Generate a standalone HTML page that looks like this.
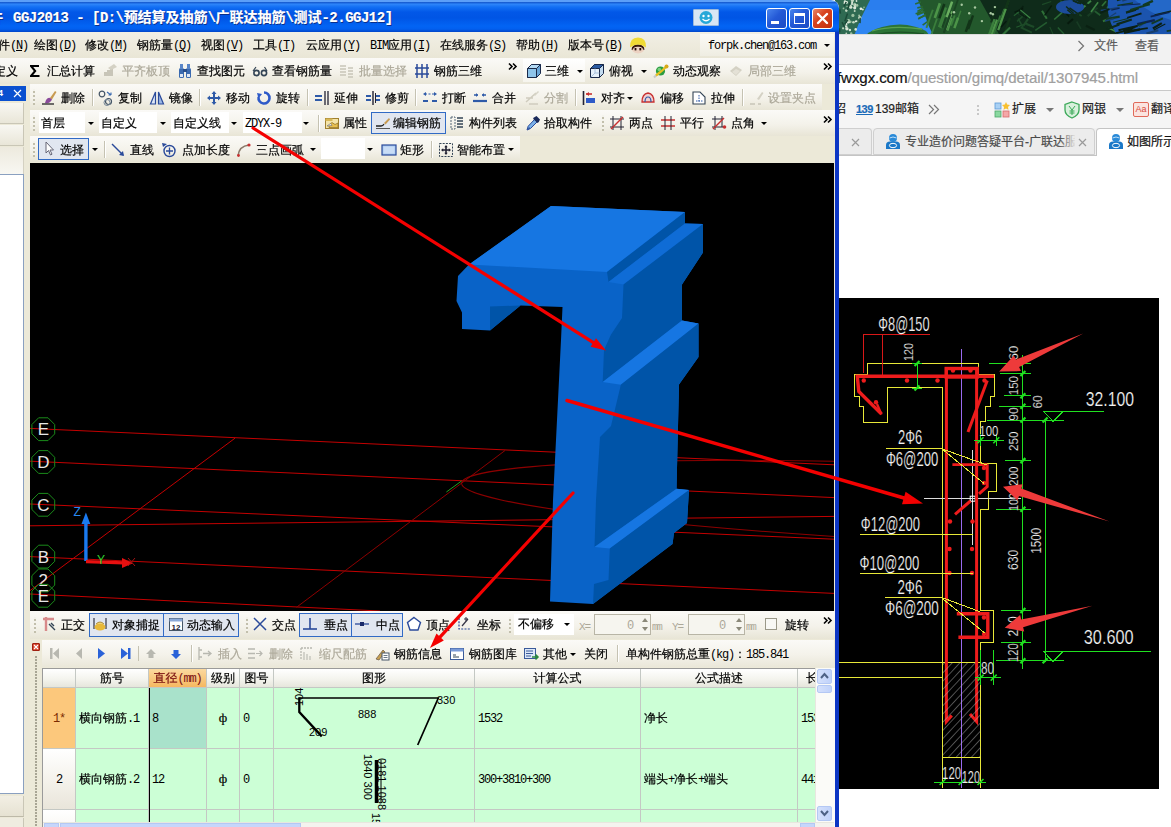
<!DOCTYPE html>
<html lang="zh"><head><meta charset="utf-8"><title>GGJ2013</title>
<style>
*{box-sizing:border-box;margin:0;padding:0}
html,body{width:1171px;height:827px;overflow:hidden;background:#fff}
body{position:relative;font-family:"Liberation Sans","WenQuanYi Zen Hei","Noto Sans CJK SC",sans-serif;font-size:12px;color:#000;line-height:14px}
i{font-style:normal;font-family:"Liberation Mono","WenQuanYi Zen Hei",monospace;letter-spacing:-1.2px;-webkit-text-stroke:0}
.ns{font-family:"Liberation Sans","Noto Sans CJK SC",sans-serif;-webkit-text-stroke:0}
.a{position:absolute}
.t{position:absolute;white-space:nowrap;height:14px;line-height:14px;font-size:12px;-webkit-text-stroke:.2px}
.g{color:#aca899}
.tb{position:absolute;left:0;width:835px;height:26px;background:linear-gradient(#fbfaf7,#f4f2ea 55%,#e8e5d6)}
.sep{position:absolute;width:1px;height:17px;background:#c5c2b2;border-right:1px solid #fff;width:2px}
.grip{position:absolute;width:2px;height:16px;background:repeating-linear-gradient(#f4f3ec 0,#f4f3ec 2px,#c2bfac 2px,#c2bfac 4px)}
.dd{position:absolute;width:0;height:0;border-left:3px solid transparent;border-right:3px solid transparent;border-top:3px solid #000}
.btn{position:absolute;border:1px solid #316ac5;background:#e1e6f0}
.chev{position:absolute;font-size:11px;font-weight:bold;line-height:10px;letter-spacing:-2px}
svg{position:absolute;overflow:visible}
</style></head>
<body>
<div class="a" style="left:835px;top:0;width:336px;height:35px;background:#1f62c8;overflow:hidden">
<svg style="left:0;top:0;filter:blur(.7px)" width="336" height="36" viewBox="835 0 336 36"><rect x="835" y="0" width="336" height="36" fill="#0d2617"/><path d="M850 0 H925 L936 36 H846Z" fill="#2f86f2"/><path d="M850 0 H925 L928 10 H850Z" fill="#2a7eee"/><path d="M835 0 H870 L866 8 L861 18 L857 28 L854 36 H835Z" fill="#2f6a52"/><circle cx="852.9" cy="15.4" r="1.6" fill="#9cc0a0"/><circle cx="859.1" cy="15.4" r="1.0" fill="#9cc0a0"/><circle cx="855.7" cy="21.4" r="0.9" fill="#eef4e8"/><circle cx="854.9" cy="4.8" r="1.6" fill="#dbe8d8"/><circle cx="848.6" cy="20.2" r="1.2" fill="#c2d8c0"/><circle cx="856.5" cy="21.2" r="0.9" fill="#dbe8d8"/><circle cx="847.1" cy="6.5" r="0.8" fill="#9cc0a0"/><circle cx="854.7" cy="11.1" r="1.0" fill="#c2d8c0"/><circle cx="850.2" cy="21.8" r="1.4" fill="#9cc0a0"/><circle cx="848.4" cy="22.3" r="1.3" fill="#dbe8d8"/><circle cx="846.5" cy="24.1" r="1.0" fill="#eef4e8"/><circle cx="856.5" cy="1.0" r="0.9" fill="#dbe8d8"/><circle cx="846.9" cy="28.8" r="1.7" fill="#dbe8d8"/><circle cx="864.0" cy="7.3" r="0.8" fill="#9cc0a0"/><circle cx="846.3" cy="33.3" r="0.9" fill="#c2d8c0"/><circle cx="845.4" cy="26.5" r="0.9" fill="#eef4e8"/><circle cx="852.4" cy="0.5" r="1.6" fill="#c2d8c0"/><circle cx="843.5" cy="8.4" r="0.9" fill="#9cc0a0"/><circle cx="855.2" cy="6.0" r="1.2" fill="#c2d8c0"/><circle cx="851.2" cy="33.5" r="1.2" fill="#9cc0a0"/><circle cx="852.0" cy="4.0" r="1.0" fill="#eef4e8"/><circle cx="855.7" cy="29.4" r="1.3" fill="#dbe8d8"/><circle cx="850.8" cy="7.2" r="1.6" fill="#dbe8d8"/><circle cx="845.0" cy="1.4" r="1.2" fill="#dbe8d8"/><circle cx="846.4" cy="26.3" r="1.1" fill="#dbe8d8"/><circle cx="846.6" cy="2.5" r="1.4" fill="#dbe8d8"/><circle cx="848.1" cy="20.4" r="1.2" fill="#9cc0a0"/><circle cx="843.1" cy="28.3" r="1.1" fill="#c2d8c0"/><circle cx="846.3" cy="10.6" r="1.3" fill="#c2d8c0"/><circle cx="857.1" cy="5.4" r="1.3" fill="#9cc0a0"/><circle cx="849.9" cy="30.0" r="1.2" fill="#dbe8d8"/><circle cx="854.5" cy="3.7" r="1.0" fill="#9cc0a0"/><circle cx="860.9" cy="8.7" r="1.3" fill="#eef4e8"/><circle cx="859.8" cy="17.7" r="1.7" fill="#c2d8c0"/><circle cx="854.7" cy="7.8" r="1.6" fill="#dbe8d8"/><circle cx="862.8" cy="9.5" r="1.0" fill="#dbe8d8"/><circle cx="852.1" cy="2.4" r="1.0" fill="#dbe8d8"/><circle cx="850.4" cy="6.0" r="1.3" fill="#c2d8c0"/><circle cx="844.7" cy="3.1" r="1.2" fill="#eef4e8"/><circle cx="853.5" cy="22.3" r="1.3" fill="#c2d8c0"/><path d="M860.2 17.7 l-0.2 5.4" stroke="#1c4a38" stroke-width="1.5"/><path d="M839.8 9.4 l0.6 4.3" stroke="#1c4a38" stroke-width="1.5"/><path d="M846.2 2.0 l-2.2 4.3" stroke="#1c4a38" stroke-width="1.5"/><path d="M847.5 13.6 l-2.7 7.7" stroke="#1c4a38" stroke-width="1.5"/><path d="M842.0 22.1 l2.8 5.4" stroke="#1c4a38" stroke-width="1.5"/><path d="M849.9 2.5 l-2.5 7.4" stroke="#1c4a38" stroke-width="1.5"/><path d="M839.7 28.3 l-0.0 4.1" stroke="#1c4a38" stroke-width="1.5"/><path d="M847.7 19.9 l-2.9 4.3" stroke="#1c4a38" stroke-width="1.5"/><path d="M868 33 Q880 25 900 24.5 Q915 25 926 31 L930 36 H866Z" fill="#2c7436"/><path d="M872 31 Q892 25 922 29" stroke="#58a050" stroke-width="1.3" fill="none"/><path d="M874 35 Q896 30 924 34" stroke="#1c5226" stroke-width="1.3" fill="none"/><path d="M918 0 H1012 L1020 36 H934 Q928 26 926 18 Q921 8 918 0Z" fill="#23582c"/><path d="M980 0 H1171 V36 H1000Z" fill="#0f2b1a"/><path d="M920.8 2.0 l-5.6 2.0" stroke="#2a6a34" stroke-width="1.6"/><path d="M923.6 9.2 l-6.7 4.7" stroke="#2a6a34" stroke-width="1.6"/><path d="M925.9 15.3 l-7.3 2.9" stroke="#2a6a34" stroke-width="1.6"/><path d="M924.6 11.9 l-7.6 3.1" stroke="#2a6a34" stroke-width="1.6"/><path d="M922.7 6.8 l-5.4 1.1" stroke="#2a6a34" stroke-width="1.6"/><path d="M928.2 21.1 l-5.6 4.1" stroke="#2a6a34" stroke-width="1.6"/><path d="M925.6 14.5 l-7.4 4.6" stroke="#2a6a34" stroke-width="1.6"/><path d="M923.1 8.1 l-5.7 3.4" stroke="#2a6a34" stroke-width="1.6"/><path d="M924.4 11.4 l-8.8 2.4" stroke="#2a6a34" stroke-width="1.6"/><path d="M1004.4 9.0 l-4.5 12.9" stroke="#2f6e34" stroke-width="2.1"/><path d="M945.9 7.5 l-6.9 19.7" stroke="#3a7e3c" stroke-width="2.4"/><path d="M960.8 10.8 l-4.8 13.8" stroke="#3a7e3c" stroke-width="1.4"/><path d="M958.1 17.7 l-3.7 10.5" stroke="#4c9448" stroke-width="2.5"/><path d="M952.1 1.7 l-5.4 15.4" stroke="#6aae60" stroke-width="2.5"/><path d="M996.5 6.4 l-5.7 16.2" stroke="#123418" stroke-width="1.6"/><path d="M997.1 19.6 l-5.4 15.4" stroke="#4c9448" stroke-width="2.4"/><path d="M952.2 11.4 l-6.3 18.1" stroke="#6aae60" stroke-width="2.0"/><path d="M954.7 15.4 l-3.6 10.2" stroke="#3a7e3c" stroke-width="1.8"/><path d="M945.2 14.9 l-4.6 13.2" stroke="#3a7e3c" stroke-width="2.3"/><path d="M1008.7 0.5 l-4.0 11.3" stroke="#1a4422" stroke-width="2.1"/><path d="M994.6 19.1 l-6.4 18.2" stroke="#3a7e3c" stroke-width="2.4"/><path d="M950.5 13.7 l-6.7 19.1" stroke="#1a4422" stroke-width="2.2"/><path d="M944.3 4.0 l-5.0 14.1" stroke="#123418" stroke-width="2.5"/><path d="M970.0 19.9 l-4.2 11.9" stroke="#123418" stroke-width="2.5"/><path d="M937.0 18.5 l-6.5 18.7" stroke="#3a7e3c" stroke-width="1.8"/><path d="M945.8 17.5 l-3.5 10.1" stroke="#1a4422" stroke-width="2.0"/><path d="M1000.3 15.5 l-7.5 21.3" stroke="#2f6e34" stroke-width="1.7"/><path d="M1008.6 0.2 l-7.1 20.4" stroke="#123418" stroke-width="2.5"/><path d="M939.9 3.3 l-5.1 14.7" stroke="#4c9448" stroke-width="2.6"/><path d="M973.0 15.4 l-4.8 13.8" stroke="#123418" stroke-width="2.4"/><path d="M957.9 -0.2 l-5.4 15.3" stroke="#1a4422" stroke-width="1.8"/><path d="M952.0 18.2 l-4.4 12.6" stroke="#4c9448" stroke-width="1.8"/><path d="M932.8 9.7 l-6.4 18.2" stroke="#3a7e3c" stroke-width="1.9"/><path d="M1010.0 17.8 l-5.7 16.2" stroke="#123418" stroke-width="2.2"/><path d="M1005.7 8.8 l-7.5 21.4" stroke="#4c9448" stroke-width="2.3"/><circle cx="969.2" cy="13.2" r="1.2" fill="#a8c8a0"/><circle cx="990.7" cy="13.2" r="1.2" fill="#a8c8a0"/><circle cx="954.0" cy="12.3" r="1.2" fill="#a8c8a0"/><circle cx="994.9" cy="7.1" r="1.2" fill="#a8c8a0"/><circle cx="981.9" cy="21.1" r="1.2" fill="#a8c8a0"/><circle cx="992.9" cy="14.2" r="1.2" fill="#a8c8a0"/><circle cx="961.7" cy="4.8" r="1.2" fill="#a8c8a0"/><circle cx="975.0" cy="7.5" r="1.2" fill="#a8c8a0"/><path d="M1062.2 12.3 l-8.0 7.2" stroke="#2f7038" stroke-width="1.6"/><path d="M1010.1 27.5 l-7.9 7.8" stroke="#2f7038" stroke-width="2.1"/><path d="M1057.8 27.6 l6.2 6.3" stroke="#245c30" stroke-width="1.4"/><path d="M1108.6 28.1 l8.2 3.8" stroke="#3c8444" stroke-width="1.7"/><path d="M1111.4 3.9 l-4.3 4.1" stroke="#2f7038" stroke-width="1.8"/><path d="M1042.0 10.7 l4.8 8.1" stroke="#2f7038" stroke-width="2.0"/><path d="M1076.7 21.5 l4.2 7.4" stroke="#183c24" stroke-width="1.6"/><path d="M1023.4 6.1 l-8.2 9.0" stroke="#0a2012" stroke-width="1.7"/><path d="M1020.7 27.4 l11.2 5.2" stroke="#1d4a28" stroke-width="2.1"/><path d="M1027.4 23.3 l-11.1 3.9" stroke="#245c30" stroke-width="1.2"/><path d="M1015.1 11.6 l10.7 6.0" stroke="#183c24" stroke-width="1.8"/><path d="M1028.1 18.8 l-4.8 7.0" stroke="#1d4a28" stroke-width="2.1"/><path d="M1116.4 3.5 l8.0 7.8" stroke="#245c30" stroke-width="2.0"/><path d="M1060.4 0.7 l5.2 4.3" stroke="#245c30" stroke-width="1.2"/><path d="M1023.2 8.5 l-8.6 3.9" stroke="#071a0e" stroke-width="1.6"/><path d="M1092.9 9.8 l7.4 5.5" stroke="#245c30" stroke-width="1.7"/><path d="M1006.5 21.0 l-5.5 6.2" stroke="#071a0e" stroke-width="1.4"/><path d="M1111.0 18.1 l-8.1 3.1" stroke="#2f7038" stroke-width="2.0"/><path d="M1086.0 25.8 l8.6 4.3" stroke="#0a2012" stroke-width="2.2"/><path d="M1097.6 7.7 l-10.0 8.4" stroke="#183c24" stroke-width="2.1"/><path d="M1020.3 9.9 l10.1 8.4" stroke="#3c8444" stroke-width="1.2"/><path d="M1026.3 23.9 l7.8 3.1" stroke="#1d4a28" stroke-width="2.2"/><path d="M1108.8 1.5 l11.6 7.7" stroke="#1d4a28" stroke-width="1.3"/><path d="M1051.7 5.5 l-7.1 10.0" stroke="#071a0e" stroke-width="1.3"/><path d="M1018.8 11.9 l-4.9 3.8" stroke="#245c30" stroke-width="1.3"/><path d="M1051.2 1.5 l-9.2 3.1" stroke="#1d4a28" stroke-width="1.3"/><path d="M1109.1 16.5 l11.7 7.0" stroke="#2f7038" stroke-width="1.8"/><path d="M1098.1 2.3 l-7.1 9.6" stroke="#3c8444" stroke-width="1.6"/><path d="M1024.4 14.9 l-7.4 6.5" stroke="#1d4a28" stroke-width="1.6"/><path d="M1073.8 11.0 l7.9 4.9" stroke="#1d4a28" stroke-width="1.8"/><path d="M1091.0 0.8 l-8.7 7.4" stroke="#3c8444" stroke-width="1.9"/><path d="M1049.8 26.9 l4.4 9.9" stroke="#1d4a28" stroke-width="1.1"/><path d="M1109.1 12.9 l6.0 8.3" stroke="#2f7038" stroke-width="1.6"/><path d="M1112.8 21.7 l5.2 9.7" stroke="#245c30" stroke-width="1.7"/><path d="M1018.2 18.7 l4.9 9.0" stroke="#1d4a28" stroke-width="1.6"/><path d="M1019.3 13.3 l7.6 4.8" stroke="#0a2012" stroke-width="1.8"/><path d="M1046.9 22.3 l-11.6 8.1" stroke="#245c30" stroke-width="1.6"/><path d="M1062.8 9.3 l6.2 7.3" stroke="#071a0e" stroke-width="1.7"/><path d="M1073.0 19.0 l-5.5 4.7" stroke="#071a0e" stroke-width="2.1"/><path d="M1106.1 1.2 l-4.1 4.8" stroke="#2f7038" stroke-width="1.7"/><ellipse cx="1070" cy="7" rx="14" ry="7" fill="#1c4c9c"/><path d="M1108 0 H1171 V36 H1118 Q1106 20 1108 0Z" fill="#1b54ae"/><path d="M1135 0 H1171 V20 Q1150 14 1135 0Z" fill="#2468c8"/><path d="M1107.3 18.4 l8.9 -5.6" stroke="#173f6e" stroke-width="1.2"/><path d="M1116.7 33.4 l13.8 -4.2" stroke="#123a22" stroke-width="1.5"/><path d="M1152.9 28.5 l8.9 -5.4" stroke="#0a1f14" stroke-width="2.2"/><path d="M1154.6 15.1 l17.0 -4.0" stroke="#0e2a1a" stroke-width="1.5"/><path d="M1146.4 33.6 l11.9 -3.3" stroke="#173f6e" stroke-width="2.2"/><path d="M1113.1 22.2 l15.0 -3.7" stroke="#123a22" stroke-width="1.1"/><path d="M1105.9 19.2 l13.8 -2.6" stroke="#123a22" stroke-width="2.2"/><path d="M1100.7 10.5 l18.9 -3.0" stroke="#173f6e" stroke-width="1.4"/><path d="M1151.5 23.6 l11.4 -5.3" stroke="#123a22" stroke-width="1.9"/><path d="M1123.2 30.8 l11.9 -3.8" stroke="#0a1f14" stroke-width="2.3"/><path d="M1166.7 31.1 l13.3 -2.0" stroke="#123a22" stroke-width="1.6"/><path d="M1115.7 32.9 l16.8 -3.4" stroke="#0a1f14" stroke-width="1.5"/><path d="M1126.0 12.4 l12.7 -4.1" stroke="#0e2a1a" stroke-width="2.0"/><path d="M1126.1 13.3 l9.9 -3.0" stroke="#0e2a1a" stroke-width="1.2"/><path d="M1153.9 30.0 l11.4 -5.9" stroke="#0a1f14" stroke-width="1.1"/><path d="M1111.3 10.1 l8.3 -1.8" stroke="#0c2450" stroke-width="1.1"/><path d="M1138.8 26.8 l9.0 -5.6" stroke="#173f6e" stroke-width="1.1"/><path d="M1122.3 0.9 l15.8 -5.5" stroke="#173f6e" stroke-width="1.6"/><path d="M1150.6 16.6 l18.9 -4.3" stroke="#0c2450" stroke-width="1.6"/><path d="M1124.0 32.9 l16.1 -3.5" stroke="#0a1f14" stroke-width="2.1"/><path d="M1105.1 21.0 l8.6 -2.2" stroke="#173f6e" stroke-width="1.5"/><path d="M1100.3 12.9 l9.1 -3.7" stroke="#0a1f14" stroke-width="1.9"/><path d="M1137.2 24.1 l17.6 -3.9" stroke="#0c2450" stroke-width="2.3"/><path d="M1117.4 5.5 l15.6 -2.6" stroke="#123a22" stroke-width="1.3"/><path d="M1130.2 9.9 l19.6 -5.7" stroke="#123a22" stroke-width="2.0"/><path d="M1121.5 5.3 l19.0 -1.4" stroke="#0c2450" stroke-width="1.0"/><path d="M1134.2 27.2 l11.8 -5.0" stroke="#123a22" stroke-width="1.3"/><path d="M1116.7 24.4 l15.1 -4.9" stroke="#0e2a1a" stroke-width="2.3"/><path d="M1128.6 31.0 l19.2 -2.9" stroke="#0a1f14" stroke-width="1.7"/><path d="M1118.5 30.2 l19.0 -4.3" stroke="#0a1f14" stroke-width="2.1"/><path d="M1106.6 29.3 l12.8 -4.9" stroke="#0e2a1a" stroke-width="2.1"/><path d="M1127.3 17.9 l14.2 -4.6" stroke="#0a1f14" stroke-width="1.9"/><path d="M1116.9 0.4 l13.7 -4.1" stroke="#0e2a1a" stroke-width="2.0"/><path d="M1143.0 5.3 l9.9 -4.4" stroke="#123a22" stroke-width="2.3"/><path d="M1083.4 2.1 l8.7 5.1" stroke="#0e2a1a" stroke-width="1.5"/><path d="M1073.1 0.8 l7.9 2.9" stroke="#0e2a1a" stroke-width="1.5"/><path d="M1062.2 14.7 l5.7 2.6" stroke="#0e2a1a" stroke-width="1.5"/><path d="M1067.3 9.8 l7.6 6.4" stroke="#0e2a1a" stroke-width="1.5"/><path d="M1079.3 1.3 l8.7 4.7" stroke="#0e2a1a" stroke-width="1.5"/><path d="M1072.7 0.3 l5.9 3.0" stroke="#0e2a1a" stroke-width="1.5"/><path d="M1078.9 12.5 l7.2 2.2" stroke="#0e2a1a" stroke-width="1.5"/><path d="M1069.5 7.9 l9.7 6.8" stroke="#0e2a1a" stroke-width="1.5"/><path d="M1066.1 6.5 l7.8 7.0" stroke="#0e2a1a" stroke-width="1.5"/><path d="M1078.4 1.1 l5.4 2.7" stroke="#0e2a1a" stroke-width="1.5"/></svg></div>
<div class="a" style="left:839px;top:34px;width:332px;height:30px;background:#f2f2f2;border-top:1px solid #dcdcdc"></div>
<svg style="left:1077px;top:40px" width="8" height="12"><path d="M1.5 1 L6.5 6 L1.5 11" stroke="#777" stroke-width="1.3" fill="none"/></svg>
<div class="t ns" style="left:1094px;top:38px;color:#5c5c5c;height:16px;line-height:16px">文件</div>
<div class="t ns" style="left:1135px;top:38px;color:#5c5c5c;height:16px;line-height:16px">查看</div>
<div class="a" style="left:839px;top:64px;width:332px;height:27px;background:#fff;border-top:1px solid #c4c4c4;border-bottom:1px solid #c9c9c9"></div>
<div class="t ns" style="left:837px;top:68px;height:20px;line-height:20px;font-size:15.1px;color:#a0a0a0;letter-spacing:-0.1px"><span style="color:#111">fwxgx.com</span>/question/gimq/detail/1307945.html</div>
<div class="a" style="left:839px;top:91px;width:332px;height:37px;background:#f5f5f5"></div>
<div class="t ns" style="left:834px;top:102px;color:#222">招</div>
<div class="t ns" style="left:856px;top:102px;font-weight:bold;color:#1a6ab8;font-size:11px;letter-spacing:-0.5px;text-decoration:underline">139</div>
<div class="t ns" style="left:875px;top:102px;color:#222">139邮箱</div>
<svg style="left:928px;top:104px" width="12" height="11"><path d="M1 1 L5.5 5.5 L1 10 M6 1 L10.5 5.5 L6 10" stroke="#777" stroke-width="1.2" fill="none"/></svg>
<div class="a" style="left:977px;top:103px;width:2px;height:14px;background:repeating-linear-gradient(#f5f5f5 0,#f5f5f5 2px,#c8c8c8 2px,#c8c8c8 4px)"></div>
<svg style="left:994px;top:102px" width="16" height="16"><rect x="1" y="1" width="6" height="6" fill="#a8d0f4" stroke="#5a9ad8" stroke-width=".8"/><rect x="1" y="9" width="6" height="6" fill="#8ad8a0" stroke="#4aa868" stroke-width=".8"/><rect x="9" y="9" width="6" height="6" fill="#f4a8a8" stroke="#d86a6a" stroke-width=".8"/><path d="M12 0 L13.2 2.6 L16 3 L14 5 L14.5 7.8 L12 6.4 L9.5 7.8 L10 5 L8 3 L10.8 2.6Z" fill="#f8c030"/></svg>
<div class="t ns" style="left:1012px;top:102px;color:#222">扩展</div>
<div class="dd" style="left:1046px;top:108px;border-top-color:#777;border-width:4px 4px 0 4px;border-top-width:4px"></div>
<svg style="left:1064px;top:101px" width="16" height="18"><path d="M8 1 L15 3.5 V9 Q15 14 8 17 Q1 14 1 9 V3.5Z" fill="#d8f0dc" stroke="#3aa858" stroke-width="1.3"/><path d="M5 5 L8 9 L11 5 M8 9 V14 M5.5 10 H10.5 M5.5 12 H10.5" stroke="#3aa858" stroke-width="1" fill="none"/></svg>
<div class="t ns" style="left:1082px;top:102px;color:#222">网银</div>
<div class="dd" style="left:1116px;top:108px;border-top-color:#777;border-width:4px 4px 0 4px"></div>
<div class="a" style="left:1133px;top:102px;width:16px;height:15px;border:1px solid #e06a5a;background:#fbe4e0;border-radius:2px;color:#d84a3a;font-size:9px;line-height:13px;text-align:center;font-family:'Liberation Sans',sans-serif">Aa</div>
<div class="t ns" style="left:1151px;top:102px;color:#222">翻译</div>
<div class="a" style="left:839px;top:128px;width:332px;height:28px;background:#f1f1f1"></div>
<div class="a" style="left:839px;top:128px;width:33px;height:27px;background:#ececec;border:1px solid #cfcfcf;border-left:0;border-radius:0 4px 0 0"></div>
<svg style="left:851px;top:138px" width="9" height="9"><path d="M1 1 L8 8 M8 1 L1 8" stroke="#9a9a9a" stroke-width="1.2"/></svg>
<div class="a" style="left:873px;top:128px;width:222px;height:27px;background:#ececec;border:1px solid #cfcfcf;border-radius:4px 4px 0 0"></div>
<div class="a" style="left:1096px;top:128px;width:90px;height:28px;background:#fff;border:1px solid #c4c4c4;border-bottom:0;border-radius:4px 4px 0 0"></div>
<div class="a" style="left:839px;top:155px;width:257px;height:1px;background:#c4c4c4"></div>
<svg style="left:885px;top:133px" width="16" height="17" viewBox="0 0 16 17"><circle cx="8" cy="5" r="4" fill="#2a8ad8"/><path d="M4.5 5 Q8 3 11.5 5" stroke="#bfe0f8" stroke-width="1" fill="none"/><path d="M1 16 V12 Q1 8.5 5 8.5 H11 Q15 8.5 15 12 V16Z" fill="#1a78c8"/><ellipse cx="8" cy="12.5" rx="3.6" ry="2.2" fill="none" stroke="#fff" stroke-width="1"/></svg>
<div class="t ns" style="left:905px;top:135px;color:#4a4a4a;width:170px;overflow:hidden">专业造价问题答疑平台-广联达服务</div>
<div class="a" style="left:1060px;top:132px;width:16px;height:20px;background:linear-gradient(90deg,rgba(236,236,236,0),#ececec)"></div>
<svg style="left:1078px;top:138px" width="9" height="9"><path d="M1 1 L8 8 M8 1 L1 8" stroke="#9a9a9a" stroke-width="1.2"/></svg>
<svg style="left:1108px;top:133px" width="16" height="17" viewBox="0 0 16 17"><circle cx="8" cy="5" r="4" fill="#2a8ad8"/><path d="M4.5 5 Q8 3 11.5 5" stroke="#bfe0f8" stroke-width="1" fill="none"/><path d="M1 16 V12 Q1 8.5 5 8.5 H11 Q15 8.5 15 12 V16Z" fill="#1a78c8"/><ellipse cx="8" cy="12.5" rx="3.6" ry="2.2" fill="none" stroke="#fff" stroke-width="1"/></svg>
<div class="t ns" style="left:1127px;top:135px;color:#111">如图所示</div>
<div class="a" style="left:839px;top:298px;width:320px;height:491px;background:#000;overflow:hidden">
<svg style="left:0;top:0" width="320" height="491" viewBox="839 298 320 491">
<defs><pattern id="h" width="6" height="5.6" patternUnits="userSpaceOnUse" patternTransform="rotate(-47)"><line x1="0" y1="0" x2="6" y2="0" stroke="#b4b4b4" stroke-width=".9"/></pattern></defs>
<polyline points="961.6,349.0 961.6,788.0" fill="none" stroke="#9a6af0" stroke-width="1"  shape-rendering="crispEdges"/>
<polyline points="942.6,757.0 942.6,387.4 887.4,387.4 887.4,422.0 863.8,422.0 863.8,406.4 859.6,406.4 859.6,396.4 854.7,396.4 854.7,374.7 867.8,374.7 867.8,363.5 978.1,363.5 978.1,374.7 994.8,374.7 994.8,396.4 990.2,396.4 990.2,406.4 985.7,406.4 985.7,421.5 980.5,421.5 980.5,463.0 996.3,463.0 996.3,491.0 988.1,491.0 988.1,509.2 980.5,509.2 980.5,610.6 993.7,610.6 993.7,642.6 980.5,642.6 980.5,757.0 942.6,757.0" fill="none" stroke="#e8e838" stroke-width="1"  shape-rendering="crispEdges"/>
<polyline points="839.0,662.9 980.5,662.9" fill="none" stroke="#e8e838" stroke-width="1"  shape-rendering="crispEdges"/>
<polyline points="839.0,677.6 942.6,677.6" fill="none" stroke="#e8e838" stroke-width="1"  shape-rendering="crispEdges"/>
<polyline points="942.6,757.0 942.6,788.0" fill="none" stroke="#e8e838" stroke-width="1"  shape-rendering="crispEdges"/>
<polyline points="980.5,757.0 980.5,788.0" fill="none" stroke="#e8e838" stroke-width="1"  shape-rendering="crispEdges"/>
<polyline points="923.7,498.7 1020.5,498.7" fill="none" stroke="#ddd" stroke-width="1"  shape-rendering="crispEdges"/>
<polyline points="972.7,450.0 972.7,545.0" fill="none" stroke="#ddd" stroke-width="1"  shape-rendering="crispEdges"/>
<rect x="970.2" y="496.2" width="5" height="5" fill="none" stroke="#fff" stroke-width="1"/>
<polyline points="863.2,373.0 863.2,334.5 929.7,334.5" fill="none" stroke="#d81818" stroke-width="1"  shape-rendering="crispEdges"/>
<polyline points="882.9,376.0 882.9,334.5" fill="none" stroke="#d81818" stroke-width="1"  shape-rendering="crispEdges"/>
<polyline points="881.5,414.0 858.8,391.5 857.3,376.3 994.0,376.3" fill="none" stroke="#ee1c1c" stroke-width="3.4" />
<polyline points="881.5,414.5 877.0,404.0" fill="none" stroke="#ee1c1c" stroke-width="2.4" />
<rect x="946.2" y="368.5" width="31" height="8.5" fill="none" stroke="#ee1c1c" stroke-width="3.4"/>
<polyline points="946.4,368.0 946.4,721.5 951.8,715.5" fill="none" stroke="#ee1c1c" stroke-width="3" />
<polyline points="976.6,368.0 976.6,721.5 970.0,714.0" fill="none" stroke="#ee1c1c" stroke-width="3" />
<polyline points="987.3,380.5 968.0,432.0" fill="none" stroke="#ee1c1c" stroke-width="3" />
<polyline points="952.4,464.6 987.2,464.6" fill="none" stroke="#ee1c1c" stroke-width="2.6" />
<polyline points="987.2,464.0 987.2,486.5 979.0,493.8" fill="none" stroke="#ee1c1c" stroke-width="3" />
<polyline points="970.5,501.0 955.0,514.3" fill="none" stroke="#ee1c1c" stroke-width="3" />
<polyline points="956.8,613.8 987.8,613.8 987.8,637.2 958.4,637.2" fill="none" stroke="#ee1c1c" stroke-width="3.4" />
<circle cx="863.8" cy="380.5" r="2.2" fill="#ee1c1c"/>
<circle cx="876.0" cy="402.3" r="2.2" fill="#ee1c1c"/>
<circle cx="907.0" cy="380.5" r="2.2" fill="#ee1c1c"/>
<circle cx="937.5" cy="380.5" r="2.2" fill="#ee1c1c"/>
<circle cx="953.0" cy="370.5" r="2.2" fill="#ee1c1c"/>
<circle cx="970.5" cy="370.5" r="2.2" fill="#ee1c1c"/>
<circle cx="984.5" cy="380.5" r="2.2" fill="#ee1c1c"/>
<circle cx="984.0" cy="468.0" r="2.2" fill="#ee1c1c"/>
<circle cx="984.0" cy="483.0" r="2.2" fill="#ee1c1c"/>
<circle cx="950.0" cy="521.5" r="2.2" fill="#ee1c1c"/>
<circle cx="972.5" cy="521.5" r="2.2" fill="#ee1c1c"/>
<circle cx="949.5" cy="549.0" r="2.2" fill="#ee1c1c"/>
<circle cx="972.0" cy="549.0" r="2.2" fill="#ee1c1c"/>
<circle cx="949.5" cy="573.0" r="2.2" fill="#ee1c1c"/>
<circle cx="972.0" cy="573.0" r="2.2" fill="#ee1c1c"/>
<circle cx="984.0" cy="617.5" r="2.2" fill="#ee1c1c"/>
<circle cx="984.0" cy="634.0" r="2.2" fill="#ee1c1c"/>
<rect x="943" y="663" width="37.6" height="94" fill="url(#h)"/>
<polyline points="1022.9,355.0 1022.9,669.0" fill="none" stroke="#20e020" stroke-width="1"  shape-rendering="crispEdges"/>
<polyline points="1045.1,420.0 1045.1,662.0" fill="none" stroke="#20e020" stroke-width="1"  shape-rendering="crispEdges"/>
<polyline points="917.0,361.7 917.0,388.5" fill="none" stroke="#20e020" stroke-width="1"  shape-rendering="crispEdges"/>
<polyline points="988.5,363.1 1031.3,363.1" fill="none" stroke="#20e020" stroke-width="1"  shape-rendering="crispEdges"/>
<polyline points="1020.4,365.6 1025.4,360.6" fill="none" stroke="#20e020" stroke-width="2.2" />
<polyline points="1000.0,373.5 1031.3,373.5" fill="none" stroke="#20e020" stroke-width="1"  shape-rendering="crispEdges"/>
<polyline points="1020.4,376.0 1025.4,371.0" fill="none" stroke="#20e020" stroke-width="2.2" />
<polyline points="1003.5,395.8 1031.3,395.8" fill="none" stroke="#20e020" stroke-width="1"  shape-rendering="crispEdges"/>
<polyline points="1020.4,398.3 1025.4,393.3" fill="none" stroke="#20e020" stroke-width="2.2" />
<polyline points="998.7,406.2 1031.3,406.2" fill="none" stroke="#20e020" stroke-width="1"  shape-rendering="crispEdges"/>
<polyline points="1020.4,408.7 1025.4,403.7" fill="none" stroke="#20e020" stroke-width="2.2" />
<polyline points="986.6,420.0 1064.0,420.0" fill="none" stroke="#20e020" stroke-width="1"  shape-rendering="crispEdges"/>
<polyline points="1020.4,422.5 1025.4,417.5" fill="none" stroke="#20e020" stroke-width="2.2" />
<polyline points="1004.7,460.6 1031.3,460.6" fill="none" stroke="#20e020" stroke-width="1"  shape-rendering="crispEdges"/>
<polyline points="1020.4,463.1 1025.4,458.1" fill="none" stroke="#20e020" stroke-width="2.2" />
<polyline points="995.8,509.2 1031.3,509.2" fill="none" stroke="#20e020" stroke-width="1"  shape-rendering="crispEdges"/>
<polyline points="1020.4,511.7 1025.4,506.7" fill="none" stroke="#20e020" stroke-width="2.2" />
<polyline points="1001.0,610.5 1031.3,610.5" fill="none" stroke="#20e020" stroke-width="1"  shape-rendering="crispEdges"/>
<polyline points="1020.4,613.0 1025.4,608.0" fill="none" stroke="#20e020" stroke-width="2.2" />
<polyline points="1001.0,642.7 1031.3,642.7" fill="none" stroke="#20e020" stroke-width="1"  shape-rendering="crispEdges"/>
<polyline points="1020.4,645.2 1025.4,640.2" fill="none" stroke="#20e020" stroke-width="2.2" />
<polyline points="995.8,660.8 1064.0,660.8" fill="none" stroke="#20e020" stroke-width="1"  shape-rendering="crispEdges"/>
<polyline points="1020.4,663.3 1025.4,658.3" fill="none" stroke="#20e020" stroke-width="2.2" />
<polyline points="1042.6,422.5 1047.6,417.5" fill="none" stroke="#20e020" stroke-width="2.2" />
<polyline points="1042.6,663.3 1047.6,658.3" fill="none" stroke="#20e020" stroke-width="2.2" />
<polyline points="912.0,363.5 922.0,363.5" fill="none" stroke="#20e020" stroke-width="1"  shape-rendering="crispEdges"/>
<polyline points="912.0,388.0 922.0,388.0" fill="none" stroke="#20e020" stroke-width="1"  shape-rendering="crispEdges"/>
<polyline points="914.5,366.0 919.5,361.0" fill="none" stroke="#20e020" stroke-width="2.2" />
<polyline points="914.5,390.5 919.5,385.5" fill="none" stroke="#20e020" stroke-width="2.2" />
<polyline points="1043.4,411.5 1103.9,411.5" fill="none" stroke="#20e020" stroke-width="1"  shape-rendering="crispEdges"/>
<polyline points="1043.4,411.5 1053.1,421.4 1062.8,411.5" fill="none" stroke="#20e020" stroke-width="1"  shape-rendering="crispEdges"/>
<polyline points="1043.4,651.6 1151.0,651.6" fill="none" stroke="#20e020" stroke-width="1"  shape-rendering="crispEdges"/>
<polyline points="1043.4,651.6 1053.1,661.5 1062.8,651.6" fill="none" stroke="#20e020" stroke-width="1"  shape-rendering="crispEdges"/>
<polyline points="973.6,440.3 1003.8,440.3" fill="none" stroke="#20e020" stroke-width="1"  shape-rendering="crispEdges"/>
<polyline points="980.5,434.0 980.5,446.0" fill="none" stroke="#20e020" stroke-width="1"  shape-rendering="crispEdges"/>
<polyline points="996.3,434.0 996.3,446.0" fill="none" stroke="#20e020" stroke-width="1"  shape-rendering="crispEdges"/>
<polyline points="977.5,443.3 983.5,437.3" fill="none" stroke="#20e020" stroke-width="1.6" />
<polyline points="993.3,443.3 999.3,437.3" fill="none" stroke="#20e020" stroke-width="1.6" />
<polyline points="974.8,677.6 1000.9,677.6" fill="none" stroke="#20e020" stroke-width="1"  shape-rendering="crispEdges"/>
<polyline points="980.6,650.0 980.6,685.0" fill="none" stroke="#20e020" stroke-width="1"  shape-rendering="crispEdges"/>
<polyline points="993.7,650.0 993.7,685.0" fill="none" stroke="#20e020" stroke-width="1"  shape-rendering="crispEdges"/>
<polyline points="977.6,680.6 983.6,674.6" fill="none" stroke="#20e020" stroke-width="1.6" />
<polyline points="990.7,680.6 996.7,674.6" fill="none" stroke="#20e020" stroke-width="1.6" />
<polyline points="934.0,782.0 986.0,782.0" fill="none" stroke="#20e020" stroke-width="1"  shape-rendering="crispEdges"/>
<polyline points="939.6,785.0 945.6,779.0" fill="none" stroke="#20e020" stroke-width="1.6" />
<polyline points="958.6,785.0 964.6,779.0" fill="none" stroke="#20e020" stroke-width="1.6" />
<polyline points="977.5,785.0 983.5,779.0" fill="none" stroke="#20e020" stroke-width="1.6" />
<polyline points="941.8,448.8 987.0,465.0" fill="none" stroke="#e8e838" stroke-width="1"  shape-rendering="crispEdges"/>
<polyline points="941.8,448.8 984.0,483.5" fill="none" stroke="#e8e838" stroke-width="1"  shape-rendering="crispEdges"/>
<polyline points="940.5,597.0 979.6,611.6" fill="none" stroke="#e8e838" stroke-width="1"  shape-rendering="crispEdges"/>
<polyline points="940.5,597.0 984.5,632.8" fill="none" stroke="#e8e838" stroke-width="1"  shape-rendering="crispEdges"/>
<polyline points="885.9,448.4 941.8,448.4" fill="none" stroke="#e8e838" stroke-width="1"  shape-rendering="crispEdges"/>
<polyline points="860.0,534.3 973.0,534.3" fill="none" stroke="#e8e838" stroke-width="1"  shape-rendering="crispEdges"/>
<polyline points="859.5,573.1 973.0,573.1" fill="none" stroke="#e8e838" stroke-width="1"  shape-rendering="crispEdges"/>
<polyline points="885.0,597.0 943.0,597.0" fill="none" stroke="#e8e838" stroke-width="1"  shape-rendering="crispEdges"/>
<text transform="translate(878.3,330.8)" font-family="Liberation Sans,sans-serif" font-size="19.5" fill="#f2f2f2" stroke="#000" stroke-width="0.2" textLength="51.2" lengthAdjust="spacingAndGlyphs">Ф8@150</text>
<text transform="translate(898.0,444.2)" font-family="Liberation Sans,sans-serif" font-size="19.5" fill="#f2f2f2" stroke="#000" stroke-width="0.2" textLength="24.2" lengthAdjust="spacingAndGlyphs">2Ф6</text>
<text transform="translate(885.9,466.3)" font-family="Liberation Sans,sans-serif" font-size="19.5" fill="#f2f2f2" stroke="#000" stroke-width="0.2" textLength="52.3" lengthAdjust="spacingAndGlyphs">Ф6@200</text>
<text transform="translate(860.8,531.0)" font-family="Liberation Sans,sans-serif" font-size="19.5" fill="#f2f2f2" stroke="#000" stroke-width="0.2" textLength="59.2" lengthAdjust="spacingAndGlyphs">Ф12@200</text>
<text transform="translate(859.5,569.8)" font-family="Liberation Sans,sans-serif" font-size="19.5" fill="#f2f2f2" stroke="#000" stroke-width="0.2" textLength="59.8" lengthAdjust="spacingAndGlyphs">Ф10@200</text>
<text transform="translate(897.4,593.7)" font-family="Liberation Sans,sans-serif" font-size="19.5" fill="#f2f2f2" stroke="#000" stroke-width="0.2" textLength="25.0" lengthAdjust="spacingAndGlyphs">2Ф6</text>
<text transform="translate(885.0,614.9)" font-family="Liberation Sans,sans-serif" font-size="19.5" fill="#f2f2f2" stroke="#000" stroke-width="0.2" textLength="53.8" lengthAdjust="spacingAndGlyphs">Ф6@200</text>
<text transform="translate(1085.8,406.2)" font-family="Liberation Sans,sans-serif" font-size="20.6" fill="#f2f2f2" stroke="#000" stroke-width="0.2" textLength="48.3" lengthAdjust="spacingAndGlyphs">32.100</text>
<text transform="translate(1083.8,643.9)" font-family="Liberation Sans,sans-serif" font-size="20.3" fill="#f2f2f2" stroke="#000" stroke-width="0.2" textLength="49.8" lengthAdjust="spacingAndGlyphs">30.600</text>
<text transform="translate(979.3,435.7)" font-family="Liberation Sans,sans-serif" font-size="14.7" fill="#f2f2f2" stroke="#000" stroke-width="0.2" textLength="19.0" lengthAdjust="spacingAndGlyphs">100</text>
<text transform="translate(981.0,673.8)" font-family="Liberation Sans,sans-serif" font-size="16.2" fill="#f2f2f2" stroke="#000" stroke-width="0.2" textLength="13.0" lengthAdjust="spacingAndGlyphs">80</text>
<text transform="translate(942.1,779.3)" font-family="Liberation Sans,sans-serif" font-size="16.9" fill="#f2f2f2" stroke="#000" stroke-width="0.2" textLength="18.9" lengthAdjust="spacingAndGlyphs">120</text>
<text transform="translate(961.8,783.1)" font-family="Liberation Sans,sans-serif" font-size="16.9" fill="#f2f2f2" stroke="#000" stroke-width="0.2" textLength="18.2" lengthAdjust="spacingAndGlyphs">120</text>
<text transform="translate(913.1,361.0) rotate(-90)" font-family="Liberation Sans,sans-serif" font-size="13.7" fill="#f2f2f2" stroke="#000" stroke-width="0.2" textLength="18.0" lengthAdjust="spacingAndGlyphs">120</text>
<text transform="translate(1018.0,360.2) rotate(-90)" font-family="Liberation Sans,sans-serif" font-size="13.2" fill="#f2f2f2" stroke="#000" stroke-width="0.2" textLength="14.5" lengthAdjust="spacingAndGlyphs">60</text>
<text transform="translate(1018.0,395.3) rotate(-90)" font-family="Liberation Sans,sans-serif" font-size="13.2" fill="#f2f2f2" stroke="#000" stroke-width="0.2" textLength="19.3" lengthAdjust="spacingAndGlyphs">150</text>
<text transform="translate(1042.2,408.6) rotate(-90)" font-family="Liberation Sans,sans-serif" font-size="13.2" fill="#f2f2f2" stroke="#000" stroke-width="0.2" textLength="13.3" lengthAdjust="spacingAndGlyphs">60</text>
<text transform="translate(1018.0,420.7) rotate(-90)" font-family="Liberation Sans,sans-serif" font-size="13.2" fill="#f2f2f2" stroke="#000" stroke-width="0.2" textLength="13.3" lengthAdjust="spacingAndGlyphs">90</text>
<text transform="translate(1018.0,451.0) rotate(-90)" font-family="Liberation Sans,sans-serif" font-size="13.2" fill="#f2f2f2" stroke="#000" stroke-width="0.2" textLength="19.4" lengthAdjust="spacingAndGlyphs">250</text>
<text transform="translate(1018.0,486.0) rotate(-90)" font-family="Liberation Sans,sans-serif" font-size="13.2" fill="#f2f2f2" stroke="#000" stroke-width="0.2" textLength="19.4" lengthAdjust="spacingAndGlyphs">200</text>
<text transform="translate(1018.0,511.0) rotate(-90)" font-family="Liberation Sans,sans-serif" font-size="13.2" fill="#f2f2f2" stroke="#000" stroke-width="0.2" textLength="18.0" lengthAdjust="spacingAndGlyphs">100</text>
<text transform="translate(1041.0,553.7) rotate(-90)" font-family="Liberation Sans,sans-serif" font-size="15.0" fill="#f2f2f2" stroke="#000" stroke-width="0.2" textLength="26.0" lengthAdjust="spacingAndGlyphs">1500</text>
<text transform="translate(1018.0,570.1) rotate(-90)" font-family="Liberation Sans,sans-serif" font-size="14.8" fill="#f2f2f2" stroke="#000" stroke-width="0.2" textLength="20.5" lengthAdjust="spacingAndGlyphs">630</text>
<text transform="translate(1018.0,636.6) rotate(-90)" font-family="Liberation Sans,sans-serif" font-size="14.8" fill="#f2f2f2" stroke="#000" stroke-width="0.2" textLength="20.5" lengthAdjust="spacingAndGlyphs">210</text>
<text transform="translate(1018.0,662.0) rotate(-90)" font-family="Liberation Sans,sans-serif" font-size="14.8" fill="#f2f2f2" stroke="#000" stroke-width="0.2" textLength="18.8" lengthAdjust="spacingAndGlyphs">120</text>
<polygon points="1083.3,333.6 1015.8,359.7 1013.9,355.6 999.2,371.6 1020.9,371.1 1019.1,367.0" fill="#ee3a3a"/>
<polygon points="1109.5,521.5 1021.4,488.5 1022.7,484.2 1003.0,486.7 1017.5,500.4 1018.9,496.1" fill="#ee3a3a"/>
<polygon points="1092.5,605.7 1021.2,619.4 1020.1,615.1 1004.7,627.7 1024.2,631.6 1023.1,627.2" fill="#ee3a3a"/>
</svg></div>
<div class="a" id="app" style="left:0;top:0;width:839px;height:827px;background:#ece9d8;overflow:hidden;border-top-right-radius:8px">
<div class="a" style="left:0;top:0;width:839px;height:32px;border-top-right-radius:8px;background:linear-gradient(#5c9ff8 0,#5c9ff8 2px,#0b52cc 2.6px,#2f86fa 4px,#1370f4 7px,#0258e8 12px,#0055e5 18px,#0264f4 26px,#0260f0 29px,#0246c8 32px)"></div>
<div class="t" style="left:-11px;top:8px;height:18px;line-height:18px;font-family:'Liberation Sans','Noto Sans CJK SC',sans-serif;font-size:14px;font-weight:bold;color:#fff;text-shadow:1px 1px 0 #0a2f8a">件</div>
<div class="t" style="left:13px;top:8px;height:18px;line-height:18px;font-family:'Liberation Sans','Noto Sans CJK SC',sans-serif;font-size:14px;font-weight:bold;color:#fff;text-shadow:1px 1px 0 #0a2f8a"><span style="font-family:'Liberation Mono',monospace;letter-spacing:-0.5px">GGJ2013 - [D:\</span>预结算及抽筋<span style="font-family:'Liberation Mono',monospace;letter-spacing:-0.5px">\</span>广联达抽筋<span style="font-family:'Liberation Mono',monospace;letter-spacing:-0.5px">\</span>测试<span style="font-family:'Liberation Mono',monospace;letter-spacing:-0.5px">-2.GGJ12]</span></div>
<div class="a" style="left:693px;top:9px;width:26px;height:17px;border-radius:1px;background:#d8e6f4;border:1px solid #9ab8dc"></div>
<svg style="left:697px;top:10px" width="18" height="15" viewBox="0 0 18 15"><circle cx="9" cy="7.5" r="6.5" fill="#28a8d8"/><circle cx="6.5" cy="6" r="1.2" fill="#fff"/><circle cx="11.5" cy="6" r="1.2" fill="#fff"/><path d="M5.5 9 Q9 12.5 12.5 9" stroke="#fff" stroke-width="1.2" fill="none"/></svg>
<div class="a" style="left:766px;top:8px;width:21px;height:21px;border-radius:3px;border:1px solid #fff;background:linear-gradient(135deg,#4a86ee,#2459d6 45%,#1c4cc4)"></div>
<div class="a" style="left:789px;top:8px;width:21px;height:21px;border-radius:3px;border:1px solid #fff;background:linear-gradient(135deg,#4a86ee,#2459d6 45%,#1c4cc4)"></div>
<div class="a" style="left:812px;top:8px;width:21px;height:21px;border-radius:3px;border:1px solid #fff;background:linear-gradient(135deg,#e8866a,#d8431f 40%,#c2300e)"></div>
<div class="a" style="left:771px;top:21px;width:8px;height:3px;background:#fff"></div>
<div class="a" style="left:794px;top:13px;width:11px;height:11px;border:1px solid #fff;border-top:3px solid #fff"></div>
<svg style="left:812px;top:8px" width="21" height="21"><path d="M6 6 L15 15 M15 6 L6 15" stroke="#fff" stroke-width="2.4" stroke-linecap="round"/></svg>
<div class="a" style="left:0;top:32px;width:835px;height:26px;background:linear-gradient(#f1efe5,#edeadc 60%,#e9e6d6)"></div>
<div class="t" style="left:-2px;top:38px">件<i>(<u>N</u>)</i></div>
<div class="t" style="left:34px;top:38px">绘图<i>(<u>D</u>)</i></div>
<div class="t" style="left:85px;top:38px">修改<i>(<u>M</u>)</i></div>
<div class="t" style="left:137px;top:38px">钢筋量<i>(<u>Q</u>)</i></div>
<div class="t" style="left:201px;top:38px">视图<i>(<u>V</u>)</i></div>
<div class="t" style="left:253px;top:38px">工具<i>(<u>T</u>)</i></div>
<div class="t" style="left:306px;top:38px">云应用<i>(<u>Y</u>)</i></div>
<div class="t" style="left:370px;top:38px"><i>BIM</i>应用<i>(<u>I</u>)</i></div>
<div class="t" style="left:440px;top:38px">在线服务<i>(<u>S</u>)</i></div>
<div class="t" style="left:516px;top:38px">帮助<i>(<u>H</u>)</i></div>
<div class="t" style="left:568px;top:38px">版本号<i>(<u>B</u>)</i></div>
<svg style="left:629px;top:36px" width="18" height="18" viewBox="0 0 18 18"><ellipse cx="9" cy="13" rx="6.2" ry="4.4" fill="#ecd2c2"/><path d="M2.6 14 Q2.4 8.5 9 8.5 Q15.6 8.5 15.4 14 L14 13.5 Q13.5 10.5 9 10.8 Q4.5 10.5 4 13.5Z" fill="#3a1a0a"/><path d="M1 11.5 Q0.5 1.5 9 1.5 Q17.5 1.5 17 11.5 Q13 8.6 9 8.6 Q5 8.6 1 11.5Z" fill="#f0da34"/><rect x="5.6" y="12" width="1.8" height="2.4" fill="#2a0e06"/><rect x="10.4" y="12" width="1.8" height="2.4" fill="#2a0e06"/></svg>
<div class="a" style="left:700px;top:34px;width:134px;height:22px;background:linear-gradient(#fbfaf6,#efede2)"></div>
<div class="t" style="left:708px;top:38px"><i>forpk.chen@163.com</i></div>
<div class="dd" style="left:824px;top:44px"></div>
<div class="tb" style="top:58px"></div>
<div class="tb" style="top:84px"></div>
<div class="tb" style="top:110px"></div>
<div class="tb" style="top:136px"></div>
<div class="t" style="left:-6px;top:64px">定义</div>
<svg style="left:27px;top:63px" width="16" height="16" viewBox="0 0 16 16"><path d="M3 2 H12 V4 H6.2 L9.5 8 L6.2 12 H12.5 V14 H3 V12.6 L6.8 8 L3 3.4 Z" fill="#000"/></svg>
<div class="t" style="left:47px;top:64px">汇总计算</div>
<svg style="left:102px;top:63px" width="16" height="16" viewBox="0 0 16 16"><path d="M2 13 V9 H5 V7 H8 V5 H11 V13 Z" fill="#c8c5b8"/><path d="M6 5 L12 1 L15 4 L9 7Z" fill="#d4d1c4"/></svg>
<div class="t g" style="left:122px;top:64px">平齐板顶</div>
<svg style="left:177px;top:63px" width="16" height="16" viewBox="0 0 16 16"><rect x="2" y="5" width="5" height="10" rx="1.5" fill="#3a6ab0"/><rect x="9" y="5" width="5" height="10" rx="1.5" fill="#3a6ab0"/><rect x="3" y="1" width="3" height="5" fill="#5a86c8"/><rect x="10" y="1" width="3" height="5" fill="#5a86c8"/><rect x="6" y="6" width="4" height="3" fill="#284e8c"/><rect x="3" y="11" width="3" height="3" fill="#dfe8f6"/><rect x="10" y="11" width="3" height="3" fill="#dfe8f6"/></svg>
<div class="t" style="left:197px;top:64px">查找图元</div>
<svg style="left:252px;top:63px" width="16" height="16" viewBox="0 0 16 16"><circle cx="4.5" cy="10" r="2.6" fill="none" stroke="#345" stroke-width="1.6"/><circle cx="12" cy="10" r="2.6" fill="none" stroke="#345" stroke-width="1.6"/><path d="M1 8 L4 4 M15 8 L12.5 4" stroke="#345" stroke-width="1.2" fill="none"/></svg>
<div class="t" style="left:272px;top:64px">查看钢筋量</div>
<svg style="left:338px;top:63px" width="16" height="16" viewBox="0 0 16 16"><path d="M2 3 H8 M2 6 H8 M2 9 H8 M2 12 H8 M10 5 H15 M10 8 H15 M10 11 H15 M10 14H15" stroke="#c8c5b8" stroke-width="1.6"/></svg>
<div class="t g" style="left:359px;top:64px">批量选择</div>
<svg style="left:414px;top:63px" width="16" height="16" viewBox="0 0 16 16"><path d="M3 1 V15 M8 1 V15 M13 1 V15 M1 5 H15 M1 11 H15" stroke="#2a4a9a" stroke-width="1.5" fill="none"/></svg>
<div class="t" style="left:434px;top:64px">钢筋三维</div>
<svg style="left:508px;top:63px" width="9" height="8"><path d="M1 0.5 L4 3.5 L1 6.5 M5 0.5 L8 3.5 L5 6.5" stroke="#000" stroke-width="1.6" fill="none"/></svg>
<div class="a" style="left:523px;top:59px;width:62px;height:23px;background:linear-gradient(#fff,#f6f5ee)"></div>
<svg style="left:526px;top:63px" width="16" height="16" viewBox="0 0 16 16"><path d="M1.5 5.5 L5.5 1.5 H14.5 V10.5 L10.5 14.5 H1.5 Z" fill="#6aa6d8" stroke="#1a2a4a" stroke-width="1"/><path d="M1.5 5.5 H10.5 V14.5 H1.5Z" fill="#8ec4ea" stroke="#1a2a4a" stroke-width="1"/><path d="M1.5 5.5 L5.5 1.5 H14.5 L10.5 5.5Z" fill="#b4daf4" stroke="#1a2a4a" stroke-width="1"/></svg>
<div class="t" style="left:545px;top:64px">三维</div>
<div class="dd" style="left:577px;top:70px"></div>
<svg style="left:589px;top:63px" width="16" height="16" viewBox="0 0 16 16"><path d="M1.5 5.5 L5.5 1.5 H14.5 V10.5 L10.5 14.5 H1.5 Z" fill="#c4dcf0" stroke="#1a2a4a" stroke-width="1"/><path d="M1.5 5.5 H10.5 V14.5 H1.5Z" fill="#e6f1fb" stroke="#1a2a4a" stroke-width="1"/><path d="M1.5 5.5 L5.5 1.5 H14.5 L10.5 5.5Z" fill="#2a5aa0" stroke="#1a2a4a" stroke-width="1"/><path d="M6 5.5 V10 H10.5 M6 10 L1.5 14.5" stroke="#9ab8d8" stroke-width=".8" fill="none"/></svg>
<div class="t" style="left:609px;top:64px">俯视</div>
<div class="dd" style="left:641px;top:70px"></div>
<svg style="left:653px;top:63px" width="16" height="16" viewBox="0 0 16 16"><path d="M1 14.5 L6 9.5" stroke="#c8c8c8" stroke-width="2.2"/><circle cx="7.5" cy="8" r="4.6" fill="#2a9c40"/><circle cx="6.3" cy="6.6" r="1.8" fill="#7ad080"/><path d="M3 12.5 Q8 9 14.5 2.5" stroke="#e4c020" stroke-width="2.2" fill="none"/><circle cx="13.5" cy="3.5" r="2" fill="#d8a818"/></svg>
<div class="t" style="left:673px;top:64px">动态观察</div>
<svg style="left:728px;top:63px" width="16" height="16" viewBox="0 0 16 16"><path d="M2 8 L8 3 L14 7 L8 13Z" fill="#d4d1c4"/><path d="M4 9 L8 6 L12 8 L8 12Z" fill="#e4e1d6"/></svg>
<div class="t g" style="left:748px;top:64px">局部三维</div>
<svg style="left:823px;top:63px" width="9" height="8"><path d="M1 0.5 L4 3.5 L1 6.5 M5 0.5 L8 3.5 L5 6.5" stroke="#000" stroke-width="1.6" fill="none"/></svg>
<div class="grip" style="left:33px;top:89px"></div>
<svg style="left:41px;top:90px" width="16" height="16" viewBox="0 0 16 16"><path d="M9 8 L14 1 L15.5 2 L11 9.5Z" fill="#c89a50"/><path d="M5 10 Q8 6 11 9.5 Q9 14 4 13Z" fill="#8a4a9a"/><path d="M1 14 H13" stroke="#333" stroke-width="1.4"/></svg>
<div class="t" style="left:61px;top:91px">删除</div>
<svg style="left:98px;top:90px" width="16" height="16" viewBox="0 0 16 16"><circle cx="4" cy="4" r="2.8" fill="none" stroke="#456" stroke-width="1.2"/><circle cx="10.5" cy="11.5" r="3" fill="none" stroke="#456" stroke-width="1.2"/><circle cx="9" cy="12.5" r="3" fill="none" stroke="#789" stroke-width="1"/><path d="M9 2 L13 5 M13 5 V2.5 M13 5 H10.5" stroke="#3a6ab0" stroke-width="1.1" fill="none"/></svg>
<div class="t" style="left:118px;top:91px">复制</div>
<svg style="left:149px;top:90px" width="16" height="16" viewBox="0 0 16 16"><path d="M6.5 2 V14 H1.5Z" fill="#dfe8f6" stroke="#2a4a9a" stroke-width="1.2"/><path d="M9.5 2 V14 H14.5Z" fill="#9cb8e6" stroke="#2a4a9a" stroke-width="1.2"/></svg>
<div class="t" style="left:169px;top:91px">镜像</div>
<svg style="left:206px;top:90px" width="16" height="16" viewBox="0 0 16 16"><path d="M8 1 L10.5 4 H9 V7 H12 V5.5 L15 8 L12 10.5 V9 H9 V12 H10.5 L8 15 L5.5 12 H7 V9 H4 V10.5 L1 8 L4 5.5 V7 H7 V4 H5.5Z" fill="#2e5aa8"/></svg>
<div class="t" style="left:226px;top:91px">移动</div>
<svg style="left:256px;top:90px" width="16" height="16" viewBox="0 0 16 16"><path d="M8 2.5 A5.5 5.5 0 1 1 2.6 7" fill="none" stroke="#2e5ac8" stroke-width="2.6"/><path d="M1 3 L6 4 L2.5 8.5Z" fill="#2e5ac8"/></svg>
<div class="t" style="left:276px;top:91px">旋转</div>
<svg style="left:314px;top:90px" width="16" height="16" viewBox="0 0 16 16"><path d="M1 6 H8 M1 10 H8" stroke="#2e5aa8" stroke-width="1.8"/><path d="M11 1 V15 M14 1 V15" stroke="#223" stroke-width="1.3"/></svg>
<div class="t" style="left:334px;top:91px">延伸</div>
<svg style="left:365px;top:90px" width="16" height="16" viewBox="0 0 16 16"><path d="M1 6 H6 M1 10 H6 M11 6 H15 M11 10 H15" stroke="#2e5aa8" stroke-width="1.8"/><path d="M8 1 V15" stroke="#223" stroke-width="1.4"/><path d="M10.5 3 V13" stroke="#223" stroke-width="1"/></svg>
<div class="t" style="left:385px;top:91px">修剪</div>
<svg style="left:422px;top:90px" width="16" height="16" viewBox="0 0 16 16"><path d="M1 11 H6 M10 11 H15" stroke="#2e5aa8" stroke-width="2.2"/><path d="M3 4 H13" stroke="#2e5aa8" stroke-width="1.2" stroke-dasharray="2 1.5"/><path d="M1 4 L4 2 V6Z M15 4 L12 2 V6Z" fill="#2e5aa8"/></svg>
<div class="t" style="left:442px;top:91px">打断</div>
<svg style="left:472px;top:90px" width="16" height="16" viewBox="0 0 16 16"><path d="M1 11 H15" stroke="#2e5aa8" stroke-width="2.2"/><path d="M2 5 H6 M10 5 H14" stroke="#2e5aa8" stroke-width="1.4"/><path d="M6 5 L4 3 V7Z M10 5 L12 3 V7Z" fill="#2e5aa8"/></svg>
<div class="t" style="left:492px;top:91px">合并</div>
<svg style="left:524px;top:90px" width="16" height="16" viewBox="0 0 16 16"><path d="M2 12 L12 3 M2 8 H9 M5 14 H14" stroke="#cfccbe" stroke-width="1.5" fill="none"/><path d="M10 5 L14 1 L15 2 L11 6Z" fill="#d8d5c8"/></svg>
<div class="t g" style="left:544px;top:91px">分割</div>
<svg style="left:581px;top:90px" width="16" height="16" viewBox="0 0 16 16"><path d="M2.5 1 V15" stroke="#223" stroke-width="1.6"/><rect x="5" y="8" width="9" height="5" fill="#2e5ac8"/><path d="M5 4 H11" stroke="#c83030" stroke-width="1.6"/><path d="M5 4 L8 2 V6Z" fill="#c83030"/></svg>
<div class="t" style="left:601px;top:91px">对齐</div>
<svg style="left:640px;top:90px" width="16" height="16" viewBox="0 0 16 16"><path d="M2 12 Q2 4 8 3 Q14 4 14 12Z" fill="#f0d0d0" stroke="#c83030" stroke-width="1.3"/><path d="M5 12 Q5 7 8 7 Q11 7 11 12" fill="none" stroke="#2e5aa8" stroke-width="1.2"/></svg>
<div class="t" style="left:660px;top:91px">偏移</div>
<svg style="left:691px;top:90px" width="16" height="16" viewBox="0 0 16 16"><path d="M2 2 H9 L14 7 V14 H2Z" fill="#fff" stroke="#345" stroke-width="1.1"/><path d="M5 11 H12 M8 5 V12" stroke="#2e5aa8" stroke-width="1" stroke-dasharray="1.5 1"/></svg>
<div class="t" style="left:711px;top:91px">拉伸</div>
<svg style="left:749px;top:90px" width="16" height="16" viewBox="0 0 16 16"><path d="M8 9 L13 2 L14.5 3 L10 10Z" fill="#d4d1c4"/><path d="M1 14 H6 M9 14 H12" stroke="#c8c5b8" stroke-width="1.6"/></svg>
<div class="t g" style="left:768px;top:91px">设置夹点</div>
<div class="sep" style="left:92px;top:89px"></div>
<div class="sep" style="left:199px;top:89px"></div>
<div class="sep" style="left:307px;top:89px"></div>
<div class="sep" style="left:415px;top:89px"></div>
<div class="sep" style="left:575px;top:89px"></div>
<div class="sep" style="left:742px;top:89px"></div>
<div class="dd" style="left:627px;top:97px"></div>
<div class="grip" style="left:33px;top:115px"></div>
<div class="a" style="left:39px;top:112px;width:46px;height:21px;background:#fff"></div>
<div class="t" style="left:41px;top:116px">首层</div>
<div class="dd" style="left:88px;top:122px"></div>
<div class="a" style="left:99px;top:112px;width:58px;height:21px;background:#fff"></div>
<div class="t" style="left:101px;top:116px">自定义</div>
<div class="dd" style="left:160px;top:122px"></div>
<div class="a" style="left:171px;top:112px;width:58px;height:21px;background:#fff"></div>
<div class="t" style="left:173px;top:116px">自定义线</div>
<div class="dd" style="left:231px;top:122px"></div>
<div class="a" style="left:243px;top:112px;width:59px;height:21px;background:#fff"></div>
<div class="t" style="left:245px;top:116px"><i>ZDYX-9</i></div>
<div class="dd" style="left:303px;top:122px"></div>
<div class="sep" style="left:318px;top:115px"></div>
<svg style="left:324px;top:115px" width="16" height="16" viewBox="0 0 16 16"><rect x="1.5" y="3.5" width="13" height="10" fill="#f4e4a8" stroke="#a08030" stroke-width="1"/><rect x="1.5" y="3.5" width="7" height="2.5" fill="#d8b858"/><path d="M5 10 L8 7.5 L11 9.5 L14 8 V12.5 H5Z" fill="#e8c050" stroke="#8a6a20" stroke-width=".7"/><path d="M3 11 L6.5 8.5 L8 10.5Z" fill="#fff" stroke="#666" stroke-width=".6"/></svg>
<div class="t" style="left:343px;top:116px">属性</div>
<div class="btn" style="left:371px;top:112px;width:75px;height:22px"></div>
<svg style="left:375px;top:115px" width="16" height="16" viewBox="0 0 16 16"><path d="M1 11 H6 Q8 11 9 9" stroke="#222" stroke-width="1.3" fill="none"/><path d="M9 8 L14 3 L15 4.5 L10.5 9.5Z" fill="#c89a50"/><path d="M1 13.5 H15" stroke="#555" stroke-width="1"/></svg>
<div class="t" style="left:393px;top:116px">编辑钢筋</div>
<svg style="left:449px;top:115px" width="16" height="16" viewBox="0 0 16 16"><path d="M2 2 H6 V14 H2Z" fill="none" stroke="#567" stroke-width="1" stroke-dasharray="2 1"/><path d="M8 3 H14 M8 6 H14 M8 9 H14 M8 12 H14" stroke="#345" stroke-width="1.3"/></svg>
<div class="t" style="left:469px;top:116px">构件列表</div>
<svg style="left:525px;top:115px" width="16" height="16" viewBox="0 0 16 16"><path d="M9.5 4.5 L12 7 L5.5 13.5 L2 15 L3.2 11.2Z" fill="#7ab0e8" stroke="#2a4a9a" stroke-width="1"/><path d="M4 12 L3 14.2 L5 13.2Z" fill="#1a3a8a"/><path d="M9 2.5 L11.5 1 L15 4.5 L13.8 7 L12.5 8 L8 3.8Z" fill="#1a2a5a"/></svg>
<div class="t" style="left:544px;top:116px">拾取构件</div>
<div class="grip" style="left:602px;top:115px"></div>
<svg style="left:609px;top:115px" width="16" height="16" viewBox="0 0 16 16"><path d="M1 4 H15 M1 12 H15 M4 1 V15 M12 1 V15" stroke="#223" stroke-width="1"/><path d="M2 14 L14 2" stroke="#c83030" stroke-width="1.4"/></svg>
<div class="t" style="left:629px;top:116px">两点</div>
<svg style="left:660px;top:115px" width="16" height="16" viewBox="0 0 16 16"><path d="M1 5 H15 M1 11 H15" stroke="#c83030" stroke-width="1.4"/><path d="M5 1 V15 M11 1 V15" stroke="#223" stroke-width="1"/></svg>
<div class="t" style="left:680px;top:116px">平行</div>
<svg style="left:711px;top:115px" width="16" height="16" viewBox="0 0 16 16"><path d="M1 4 H12 M1 12 H15 M4 1 V15 M11 1 V12" stroke="#223" stroke-width="1"/><path d="M2 14 L13 3" stroke="#c83030" stroke-width="1.4"/><circle cx="13.5" cy="12" r="1.8" fill="#c83030"/></svg>
<div class="t" style="left:731px;top:116px">点角</div>
<div class="dd" style="left:761px;top:122px"></div>
<svg style="left:823px;top:116px" width="9" height="8"><path d="M1 0.5 L4 3.5 L1 6.5 M5 0.5 L8 3.5 L5 6.5" stroke="#000" stroke-width="1.6" fill="none"/></svg>
<div class="grip" style="left:33px;top:141px"></div>
<div class="btn" style="left:38px;top:138px;width:51px;height:22px"></div>
<svg style="left:42px;top:141px" width="16" height="16" viewBox="0 0 16 16"><path d="M4 1 V12 L6.5 9.5 L8.5 14 L10 13.2 L8 9 H11.5Z" fill="#fff" stroke="#667" stroke-width="1"/></svg>
<div class="t" style="left:60px;top:143px">选择</div>
<div class="dd" style="left:92px;top:148px"></div>
<div class="sep" style="left:104px;top:141px"></div>
<svg style="left:110px;top:142px" width="16" height="16" viewBox="0 0 16 16"><path d="M2 2 L13 13" stroke="#2a4a9a" stroke-width="1.4"/><path d="M14 14 L9 13 L13 9Z" fill="#2a4a9a"/></svg>
<div class="t" style="left:130px;top:143px">直线</div>
<svg style="left:161px;top:142px" width="16" height="16" viewBox="0 0 16 16"><circle cx="8.5" cy="9" r="5.5" fill="none" stroke="#2a4a9a" stroke-width="1.4"/><path d="M8.5 5.5 V12.5 M5 9 H12" stroke="#2a4a9a" stroke-width="1.3"/><path d="M1 1 L6 2 L2 5Z" fill="#2a4a9a"/></svg>
<div class="t" style="left:182px;top:143px">点加长度</div>
<svg style="left:236px;top:142px" width="16" height="16" viewBox="0 0 16 16"><path d="M2 14 Q3 4 13 3" stroke="#8a7a6a" stroke-width="1.6" fill="none"/><circle cx="13" cy="3" r="1.6" fill="#c83030"/><circle cx="2.5" cy="13.5" r="1.4" fill="#c83030"/></svg>
<div class="t" style="left:256px;top:143px">三点画弧</div>
<div class="dd" style="left:310px;top:148px"></div>
<div class="a" style="left:321px;top:138px;width:44px;height:21px;background:#fff"></div>
<div class="dd" style="left:367px;top:148px"></div>
<svg style="left:381px;top:142px" width="16" height="16" viewBox="0 0 16 16"><rect x="1" y="3" width="14" height="10" fill="#a8c8f0" stroke="#2a4a9a" stroke-width="1.2"/><rect x="2.5" y="4.5" width="11" height="7" fill="#c8dcf6"/></svg>
<div class="t" style="left:400px;top:143px">矩形</div>
<div class="sep" style="left:431px;top:141px"></div>
<svg style="left:438px;top:142px" width="16" height="16" viewBox="0 0 16 16"><rect x="1.5" y="1.5" width="13" height="13" fill="none" stroke="#345" stroke-width="1" stroke-dasharray="2 1.2"/><path d="M8 4 V12 M4 8 H12" stroke="#223" stroke-width="1.6"/><path d="M8 3 L6.3 5.2 H9.7Z M8 13 L6.3 10.8 H9.7Z M3 8 L5.2 6.3 V9.7Z M13 8 L10.8 6.3 V9.7Z" fill="#223"/></svg>
<div class="t" style="left:457px;top:143px">智能布置</div>
<div class="dd" style="left:508px;top:148px"></div>
<div class="a" style="left:520px;top:136px;width:315px;height:27px;background:#ece9d8"></div>
<div class="a" style="left:822px;top:84px;width:13px;height:26px;background:#ece9d8"></div>
<div class="a" style="left:0;top:84px;width:30px;height:743px;background:#ece9d8"></div>
<div class="a" style="left:0;top:86px;width:26px;height:15px;background:#0a50d0"></div>
<div class="a" style="left:-2px;top:89px;width:6px;height:8px;color:#fff;font-size:9px;font-weight:bold;line-height:9px">4</div>
<svg style="left:13px;top:89px" width="9" height="9"><path d="M1 1 L8 8 M8 1 L1 8" stroke="#fff" stroke-width="1.2"/></svg>
<div class="a" style="left:0;top:103px;width:24px;height:21px;background:linear-gradient(#f8f7f2,#e9e6d8);border-right:1px solid #c9c6b6;border-bottom:1px solid #c9c6b6"></div>
<div class="a" style="left:0;top:125px;width:24px;height:21px;background:linear-gradient(#f8f7f2,#e9e6d8);border-right:1px solid #c9c6b6;border-bottom:1px solid #c9c6b6"></div>
<div class="a" style="left:0;top:147px;width:24px;height:27px;background:linear-gradient(#edeade,#f8f7f2);border-right:1px solid #d4d1c2"></div>
<div class="a" style="left:0;top:174px;width:24px;height:620px;background:#fff;border-right:1px solid #8aa0c0;border-top:1px solid #8aa0c0;border-bottom:1px solid #8aa0c0"></div>
<div class="a" style="left:0;top:796px;width:24px;height:21px;background:linear-gradient(#f2efe4,#e6e2d2);border-right:1px solid #c9c6b6;border-bottom:1px solid #bdb9a8"></div>
<div class="a" style="left:0;top:818px;width:24px;height:9px;background:#efece0;border-right:1px solid #c9c6b6"></div>
<div class="a" style="left:30px;top:163px;width:804px;height:448px;background:#000;overflow:hidden">
<svg style="left:-30px;top:-163px" width="864" height="611" viewBox="0 0 864 611">
<line x1="30.0" y1="428.4" x2="834.0" y2="464.8" stroke="#c40000" stroke-width="1"/>
<line x1="30.0" y1="461.2" x2="834.0" y2="497.6" stroke="#c40000" stroke-width="1"/>
<line x1="30.0" y1="504.0" x2="834.0" y2="539.2" stroke="#c40000" stroke-width="1"/>
<line x1="30.0" y1="556.6" x2="834.0" y2="593.4" stroke="#c40000" stroke-width="1"/>
<line x1="30.0" y1="525.8" x2="834.0" y2="516.4" stroke="#c40000" stroke-width="1"/>
<line x1="30.0" y1="594.0" x2="380.0" y2="611.0" stroke="#c40000" stroke-width="1"/>
<line x1="30.0" y1="590.6" x2="235.0" y2="438.2" stroke="#c40000" stroke-width="1"/>
<line x1="296.5" y1="607.3" x2="505.0" y2="450.5" stroke="#8c0000" stroke-width="1"/>
<ellipse cx="0" cy="0" rx="538.5" ry="39.4" transform="translate(1000,505.8) skewY(2.39)" fill="none" stroke="#8c0000" stroke-width="1"/>
<line x1="446.4" y1="492" x2="461.5" y2="481" stroke="#20a020" stroke-width="1"/>
<polygon points="551.0,206.0 685.0,212.0 685.0,223.5 703.0,224.0 703.0,252.5 682.0,284.5 682.0,320.5 698.5,323.5 698.5,357.0 679.0,384.5 676.5,488.8 689.0,490.0 687.0,523.0 674.0,533.0 672.5,544.0 593.0,604.0 550.0,601.5 553.0,500.0 556.0,440.0 558.5,390.0 561.0,340.0 562.5,307.0 520.5,305.5 490.0,330.5 462.0,329.0 462.0,312.5 456.5,301.0 458.0,276.0 469.0,264.5" fill="#0963c8"/>
<polygon points="551.0,206.0 685.0,212.0 607.0,272.0 469.0,264.5" fill="#1676e2"/>
<polygon points="685.0,212.0 685.0,223.5 608.5,282.0 607.0,272.0" fill="#0054a8"/>
<polygon points="685.0,223.5 703.0,224.0 623.5,284.5 608.5,282.0" fill="#0f6cd6"/>
<polygon points="623.5,284.5 703.0,224.0 703.0,252.5 682.0,284.5 682.0,320.5 602.7,382.0 604.0,350.0 611.0,334.5 622.0,318.0" fill="#0054a8"/>
<polygon points="490.0,306.5 520.5,305.5 490.0,330.5" fill="#0054a8"/>
<polygon points="602.7,382.0 682.0,320.5 698.5,323.5 620.8,384.7" fill="#1676e2"/>
<polygon points="620.8,384.7 698.5,323.5 698.5,357.0 679.0,384.5 676.5,488.8 676.4,488.7 594.5,547.0 596.0,500.0 600.0,437.0 611.0,426.0 619.6,390.0" fill="#0054a8"/>
<polygon points="594.5,547.0 676.6,488.7 689.0,490.0 609.8,548.5" fill="#1676e2"/>
<polygon points="609.8,548.5 689.0,490.0 687.0,523.0 674.0,533.0 672.5,544.0 593.0,604.0 594.0,584.0 608.5,580.0" fill="#0054a8"/>
<line x1="85.9" y1="561" x2="85.9" y2="522" stroke="#1a7af0" stroke-width="3.4"/><polygon points="81.5,524 90.3,524 85.9,512.5" fill="#1a7af0"/>
<line x1="86" y1="561.6" x2="124" y2="562.8" stroke="#e81010" stroke-width="3.2"/><polygon points="122,558 122,568 133,563.2" fill="#e81010"/>
<path d="M128 558 L135 566 M135 558 L128 566" stroke="#a01010" stroke-width="1"/>
<text x="73.5" y="515.5" font-family="Liberation Sans,sans-serif" font-size="12" fill="#2a8af0">Z</text>
<text x="97" y="563.5" font-family="Liberation Sans,sans-serif" font-size="12" fill="#30d030">Y</text>
<polygon points="54.7,433.9 48.0,440.6 38.6,440.6 31.9,433.9 31.9,424.5 38.6,417.8 48.0,417.8 54.7,424.5" fill="none" stroke="#1a8a1a" stroke-width="1"/>
<text x="43.3" y="435.2" text-anchor="middle" font-family="Liberation Sans,sans-serif" font-size="17" fill="#e6e6e6">E</text>
<polygon points="54.7,466.7 48.0,473.4 38.6,473.4 31.9,466.7 31.9,457.3 38.6,450.6 48.0,450.6 54.7,457.3" fill="none" stroke="#1a8a1a" stroke-width="1"/>
<text x="43.3" y="468.0" text-anchor="middle" font-family="Liberation Sans,sans-serif" font-size="17" fill="#e6e6e6">D</text>
<polygon points="54.7,509.5 48.0,516.2 38.6,516.2 31.9,509.5 31.9,500.1 38.6,493.4 48.0,493.4 54.7,500.1" fill="none" stroke="#1a8a1a" stroke-width="1"/>
<text x="43.3" y="510.8" text-anchor="middle" font-family="Liberation Sans,sans-serif" font-size="17" fill="#e6e6e6">C</text>
<polygon points="54.7,561.3 48.0,568.0 38.6,568.0 31.9,561.3 31.9,551.9 38.6,545.2 48.0,545.2 54.7,551.9" fill="none" stroke="#1a8a1a" stroke-width="1"/>
<text x="43.3" y="562.6" text-anchor="middle" font-family="Liberation Sans,sans-serif" font-size="17" fill="#e6e6e6">B</text>
<polygon points="54.7,585.1 48.0,591.8 38.6,591.8 31.9,585.1 31.9,575.7 38.6,569.0 48.0,569.0 54.7,575.7" fill="none" stroke="#1a8a1a" stroke-width="1"/>
<text x="43.3" y="586.4" text-anchor="middle" font-family="Liberation Sans,sans-serif" font-size="17" fill="#e6e6e6">2</text>
<polygon points="54.7,600.5 48.0,607.2 38.6,607.2 31.9,600.5 31.9,591.1 38.6,584.4 48.0,584.4 54.7,591.1" fill="none" stroke="#1a8a1a" stroke-width="1"/>
<text x="43.3" y="601.8" text-anchor="middle" font-family="Liberation Sans,sans-serif" font-size="17" fill="#e6e6e6">E</text>
</svg></div>
<div class="a" style="left:30px;top:611px;width:805px;height:28px;background:linear-gradient(#fbfaf7,#f4f2ea 55%,#e8e5d6)"></div>
<div class="grip" style="left:34px;top:617px"></div>
<svg style="left:41px;top:616px" width="16" height="16" viewBox="0 0 16 16"><path d="M2 3 H13 M5 1 V15" stroke="#d88a8a" stroke-width="2.4"/><path d="M8 8 L14 14 M10 7 L13 10" stroke="#345" stroke-width="1.4"/></svg>
<div class="t" style="left:61px;top:618px">正交</div>
<div class="btn" style="left:89px;top:613px;width:75px;height:24px"></div>
<svg style="left:92px;top:616px" width="16" height="16" viewBox="0 0 16 16"><path d="M2 2 V13 M14 2 V13" stroke="#334" stroke-width="1.2"/><ellipse cx="8" cy="11" rx="5.5" ry="3.5" fill="#e8b838"/><path d="M4 8 Q8 4 12 8" fill="#f0d070" stroke="#a07820" stroke-width=".8"/></svg>
<div class="t" style="left:112px;top:618px">对象捕捉</div>
<div class="btn" style="left:163px;top:613px;width:76px;height:24px"></div>
<svg style="left:168px;top:616px" width="16" height="16" viewBox="0 0 16 16"><rect x="1.5" y="2.5" width="13" height="12" fill="#fff" stroke="#456" stroke-width="1"/><rect x="1.5" y="2.5" width="13" height="3" fill="#8aa8d8"/><text x="8" y="13.5" font-size="8" font-weight="bold" text-anchor="middle" font-family="Liberation Sans,sans-serif" fill="#223">12</text></svg>
<div class="t" style="left:187px;top:618px">动态输入</div>
<div class="grip" style="left:246px;top:617px"></div>
<svg style="left:252px;top:616px" width="16" height="16" viewBox="0 0 16 16"><path d="M2 2 L14 14 M14 2 L2 14" stroke="#2a4a9a" stroke-width="1.5"/></svg>
<div class="t" style="left:272px;top:618px">交点</div>
<div class="btn" style="left:299px;top:613px;width:53px;height:24px"></div>
<svg style="left:302px;top:616px" width="16" height="16" viewBox="0 0 16 16"><path d="M1 13 H15" stroke="#2a4a9a" stroke-width="1.6"/><path d="M8 2 V13" stroke="#2a4a9a" stroke-width="1.6"/></svg>
<div class="t" style="left:324px;top:618px">垂点</div>
<div class="btn" style="left:351px;top:613px;width:52px;height:24px"></div>
<svg style="left:354px;top:616px" width="16" height="16" viewBox="0 0 16 16"><path d="M1 8 H15" stroke="#2a4a9a" stroke-width="1.3"/><rect x="6" y="6" width="4" height="4" fill="#1a2a6a"/></svg>
<div class="t" style="left:376px;top:618px">中点</div>
<svg style="left:406px;top:616px" width="16" height="16" viewBox="0 0 16 16"><path d="M8 1.5 L14.5 6.5 L12 14 H4 L1.5 6.5Z" fill="#fff" stroke="#2a4a9a" stroke-width="1.4"/></svg>
<div class="t" style="left:426px;top:618px">顶点</div>
<svg style="left:456px;top:616px" width="16" height="16" viewBox="0 0 16 16"><path d="M3 2 V13 H14" stroke="#2a4a9a" stroke-width="1.2" fill="none" stroke-dasharray="2 1.3"/><path d="M6 10 L12 3" stroke="#334" stroke-width="1.2"/><path d="M10 1 V5 M8 3 H12" stroke="#334" stroke-width="1"/></svg>
<div class="t" style="left:477px;top:618px">坐标</div>
<div class="grip" style="left:509px;top:617px"></div>
<div class="a" style="left:514px;top:614px;width:60px;height:21px;background:#fff"></div>
<div class="t" style="left:518px;top:617px">不偏移</div>
<div class="dd" style="left:564px;top:623px"></div>
<div class="t g" style="left:579px;top:619px;font-size:11px"><i>X=</i></div>
<div class="a" style="left:594px;top:614px;width:57px;height:21px;background:#f6f5ef;border:1px solid #b8b5a6"></div>
<div class="t g" style="left:627px;top:618px"><i>0</i></div>
<div class="t g" style="left:652px;top:620px;font-size:10px"><i>mm</i></div>
<div class="t g" style="left:672px;top:619px;font-size:11px"><i>Y=</i></div>
<div class="a" style="left:688px;top:614px;width:57px;height:21px;background:#f6f5ef;border:1px solid #b8b5a6"></div>
<div class="t g" style="left:719px;top:618px"><i>0</i></div>
<div class="t g" style="left:746px;top:620px;font-size:10px"><i>mm</i></div>
<svg style="left:641px;top:616px" width="8" height="17"><path d="M1 6 L4 2 L7 6Z M1 11 L4 15 L7 11Z" fill="#8a8878"/></svg>
<svg style="left:735px;top:616px" width="8" height="17"><path d="M1 6 L4 2 L7 6Z M1 11 L4 15 L7 11Z" fill="#8a8878"/></svg>
<div class="a" style="left:765px;top:618px;width:12px;height:12px;background:#f8f8f4;border:1px solid #9a9888"></div>
<div class="t" style="left:785px;top:618px">旋转</div>
<svg style="left:823px;top:617px" width="9" height="8"><path d="M1 0.5 L4 3.5 L1 6.5 M5 0.5 L8 3.5 L5 6.5" stroke="#000" stroke-width="1.6" fill="none"/></svg>
<div class="a" style="left:30px;top:639px;width:805px;height:188px;background:#ece9d8"></div>
<div class="a" style="left:42px;top:640px;width:792px;height:27px;background:linear-gradient(#fbfaf7,#f4f2ea 55%,#eae7d9)"></div>
<div class="a" style="left:32px;top:643px;width:8px;height:8px;background:#d84830;border:1px solid #a02010;border-radius:1px"></div>
<svg style="left:33px;top:644px" width="6" height="6"><path d="M1 1 L5 5 M5 1 L1 5" stroke="#fff" stroke-width="1.1"/></svg>
<div class="a" style="left:35px;top:655px;width:2px;height:172px;background:repeating-linear-gradient(#ece9d8 0,#ece9d8 1px,#a8a594 1px,#a8a594 3px)"></div>
<svg style="left:48px;top:646px" width="140" height="16" viewBox="48 0 140 16"><path d="M50 2 V13 H52.5 V2Z M59 2 L53 7.5 L59 13Z" fill="#b8b8b0"/><path d="M82 2 L76 7.5 L82 13Z" fill="#b8b8b0"/><path d="M98 2 L105 7.5 L98 13Z" fill="#2a62d8"/><path d="M121 2 L128 7.5 L121 13Z M128 2 H130.5 V13 H128Z" fill="#2a62d8"/><path d="M138.5 0 V15" stroke="#c5c2b2" stroke-width="1"/><path d="M151 3 L156 8 H153.5 V12 H148.5 V8 H146Z" fill="#b8b8b0"/><path d="M176 13 L181 8 H178.5 V4 H173.5 V8 H171Z" fill="#2a62d8"/></svg>
<div class="sep" style="left:191px;top:645px"></div>
<svg style="left:197px;top:646px" width="16" height="16"><path d="M2 1 V14 M2 4 H5 M2 11 H5" stroke="#b8b8b0" stroke-width="1.3" fill="none"/><path d="M6 7.5 H14 M11 5 L14 7.5 L11 10" stroke="#b8b8b0" stroke-width="1.3" fill="none"/></svg>
<div class="t g" style="left:218px;top:647px">插入</div>
<svg style="left:247px;top:646px" width="16" height="16"><path d="M1 3 H8 M1 7.5 H8 M1 12 H8" stroke="#b8b8b0" stroke-width="1.5"/><path d="M9 7.5 H15 M12.5 5 L15 7.5 L12.5 10" stroke="#b8b8b0" stroke-width="1.2" fill="none"/></svg>
<div class="t g" style="left:269px;top:647px">删除</div>
<svg style="left:299px;top:646px" width="16" height="16"><path d="M2 2 H14 M2 2 V14" stroke="#b8b8b0" stroke-width="1.3" stroke-dasharray="2 1" fill="none"/><path d="M5 14 V6 M8 14 V8 M11 14 V10" stroke="#c8c8c0" stroke-width="1.5"/></svg>
<div class="t g" style="left:319px;top:647px">缩尺配筋</div>
<svg style="left:374px;top:646px" width="16" height="16"><path d="M2 13 L9 4 L11 6 L5 14Z" fill="#c8a050" stroke="#654" stroke-width=".7"/><rect x="8" y="7" width="7" height="7" fill="#fff" stroke="#456" stroke-width="1"/><path d="M9.5 9.5 H13.5 M9.5 11.5 H13.5" stroke="#456" stroke-width=".8"/></svg>
<div class="t" style="left:394px;top:647px">钢筋信息</div>
<svg style="left:449px;top:646px" width="16" height="16"><rect x="1.5" y="2.5" width="13" height="11" fill="#fff" stroke="#3a5a9a" stroke-width="1"/><rect x="1.5" y="2.5" width="13" height="3" fill="#7a9ad8"/><path d="M4 9 H7 M4 11 H10" stroke="#345" stroke-width="1"/></svg>
<div class="t" style="left:469px;top:647px">钢筋图库</div>
<svg style="left:523px;top:646px" width="16" height="16"><rect x="1.5" y="2.5" width="11" height="10" fill="#dce8f8" stroke="#3a5a9a" stroke-width="1"/><path d="M3 5 H10 M3 7.5 H10 M3 10 H8" stroke="#3a5a9a" stroke-width="1"/><path d="M9 11 H15 M12.5 8.5 L15 11 L12.5 13.5" stroke="#2a8a3a" stroke-width="1.5" fill="none"/></svg>
<div class="t" style="left:543px;top:647px">其他</div>
<div class="dd" style="left:570px;top:653px"></div>
<div class="t" style="left:584px;top:647px">关闭</div>
<div class="sep" style="left:617px;top:645px"></div>
<div class="t" style="left:626px;top:647px">单构件钢筋总重<i>(kg)</i>：<i>185.841</i></div>
<div class="a" style="left:42px;top:668px;width:792px;height:159px;background:#fff;border-left:1px solid #9a9a9a;border-top:1px solid #9a9a9a;overflow:hidden;-webkit-text-stroke:.2px">
<div class="a" style="left:0px;top:0;width:33px;height:19px;background:linear-gradient(#ffffff,#f4f4ee 55%,#e6e6dc);border-right:1px solid #c4c8c4;border-bottom:1px solid #c4c8c4;text-align:center;line-height:19px;color:#000;white-space:nowrap"></div>
<div class="a" style="left:33px;top:0;width:73px;height:19px;background:linear-gradient(#ffffff,#f4f4ee 55%,#e6e6dc);border-right:1px solid #c4c8c4;border-bottom:1px solid #c4c8c4;text-align:center;line-height:19px;color:#000;white-space:nowrap">筋号</div>
<div class="a" style="left:106px;top:0;width:58px;height:19px;background:linear-gradient(#fbd9a0,#f6b860);border-right:1px solid #c4c8c4;border-bottom:1px solid #c4c8c4;text-align:center;line-height:19px;color:#7a1010;white-space:nowrap">直径<i>(mm)</i></div>
<div class="a" style="left:164px;top:0;width:33px;height:19px;background:linear-gradient(#ffffff,#f4f4ee 55%,#e6e6dc);border-right:1px solid #c4c8c4;border-bottom:1px solid #c4c8c4;text-align:center;line-height:19px;color:#000;white-space:nowrap">级别</div>
<div class="a" style="left:197px;top:0;width:34px;height:19px;background:linear-gradient(#ffffff,#f4f4ee 55%,#e6e6dc);border-right:1px solid #c4c8c4;border-bottom:1px solid #c4c8c4;text-align:center;line-height:19px;color:#000;white-space:nowrap">图号</div>
<div class="a" style="left:231px;top:0;width:201px;height:19px;background:linear-gradient(#ffffff,#f4f4ee 55%,#e6e6dc);border-right:1px solid #c4c8c4;border-bottom:1px solid #c4c8c4;text-align:center;line-height:19px;color:#000;white-space:nowrap">图形</div>
<div class="a" style="left:432px;top:0;width:166px;height:19px;background:linear-gradient(#ffffff,#f4f4ee 55%,#e6e6dc);border-right:1px solid #c4c8c4;border-bottom:1px solid #c4c8c4;text-align:center;line-height:19px;color:#000;white-space:nowrap">计算公式</div>
<div class="a" style="left:598px;top:0;width:157px;height:19px;background:linear-gradient(#ffffff,#f4f4ee 55%,#e6e6dc);border-right:1px solid #c4c8c4;border-bottom:1px solid #c4c8c4;text-align:center;line-height:19px;color:#000;white-space:nowrap">公式描述</div>
<div class="a" style="left:755px;top:0;width:40px;height:19px;background:linear-gradient(#ffffff,#f4f4ee 55%,#e6e6dc);border-right:1px solid #c4c8c4;border-bottom:1px solid #c4c8c4;padding-left:8px;line-height:19px;white-space:nowrap;overflow:hidden">长度</div>
<div class="a" style="left:0px;top:19px;width:33px;height:61px;background:#fcc87c;border-right:1px solid #c4c8c4;border-bottom:1px solid #c4c8c4;line-height:60px;white-space:nowrap;overflow:hidden;text-align:center;color:#7a2a00;"><i>1*</i></div>
<div class="a" style="left:33px;top:19px;width:73px;height:61px;background:#ccffd6;border-right:1px solid #c4c8c4;border-bottom:1px solid #c4c8c4;line-height:60px;white-space:nowrap;overflow:hidden;padding-left:3px;">横向钢筋<i>.1</i></div>
<div class="a" style="left:106px;top:19px;width:58px;height:61px;background:#a9e2cb;border-right:1px solid #c4c8c4;border-bottom:1px solid #c4c8c4;line-height:60px;white-space:nowrap;overflow:hidden;padding-left:3px;"><i>8</i></div>
<div class="a" style="left:164px;top:19px;width:33px;height:61px;background:#ccffd6;border-right:1px solid #c4c8c4;border-bottom:1px solid #c4c8c4;line-height:60px;white-space:nowrap;overflow:hidden;text-align:center;"><span style="font-family:'Liberation Serif',serif;font-size:13px">ф</span></div>
<div class="a" style="left:197px;top:19px;width:34px;height:61px;background:#ccffd6;border-right:1px solid #c4c8c4;border-bottom:1px solid #c4c8c4;line-height:60px;white-space:nowrap;overflow:hidden;padding-left:3px;"><i>0</i></div>
<div class="a" style="left:231px;top:19px;width:201px;height:61px;background:#ccffd6;border-right:1px solid #c4c8c4;border-bottom:1px solid #c4c8c4;line-height:60px;white-space:nowrap;overflow:hidden;padding-left:3px;"></div>
<div class="a" style="left:432px;top:19px;width:166px;height:61px;background:#ccffd6;border-right:1px solid #c4c8c4;border-bottom:1px solid #c4c8c4;line-height:60px;white-space:nowrap;overflow:hidden;padding-left:3px;"><i>1532</i></div>
<div class="a" style="left:598px;top:19px;width:157px;height:61px;background:#ccffd6;border-right:1px solid #c4c8c4;border-bottom:1px solid #c4c8c4;line-height:60px;white-space:nowrap;overflow:hidden;padding-left:3px;">净长</div>
<div class="a" style="left:755px;top:19px;width:40px;height:61px;background:#ccffd6;border-right:1px solid #c4c8c4;border-bottom:1px solid #c4c8c4;line-height:60px;white-space:nowrap;overflow:hidden;padding-left:3px;"><i>1532</i></div>
<div class="a" style="left:0px;top:80px;width:33px;height:61px;background:linear-gradient(180deg,#ffffff,#f6f4ee 45%,#e9e5da);border-right:1px solid #c4c8c4;border-bottom:1px solid #c4c8c4;line-height:60px;white-space:nowrap;overflow:hidden;text-align:center;"><i>2</i></div>
<div class="a" style="left:33px;top:80px;width:73px;height:61px;background:#ccffd6;border-right:1px solid #c4c8c4;border-bottom:1px solid #c4c8c4;line-height:60px;white-space:nowrap;overflow:hidden;padding-left:3px;">横向钢筋<i>.2</i></div>
<div class="a" style="left:106px;top:80px;width:58px;height:61px;background:#ccffd6;border-right:1px solid #c4c8c4;border-bottom:1px solid #c4c8c4;line-height:60px;white-space:nowrap;overflow:hidden;padding-left:3px;"><i>12</i></div>
<div class="a" style="left:164px;top:80px;width:33px;height:61px;background:#ccffd6;border-right:1px solid #c4c8c4;border-bottom:1px solid #c4c8c4;line-height:60px;white-space:nowrap;overflow:hidden;text-align:center;"><span style="font-family:'Liberation Serif',serif;font-size:13px">ф</span></div>
<div class="a" style="left:197px;top:80px;width:34px;height:61px;background:#ccffd6;border-right:1px solid #c4c8c4;border-bottom:1px solid #c4c8c4;line-height:60px;white-space:nowrap;overflow:hidden;padding-left:3px;"><i>0</i></div>
<div class="a" style="left:231px;top:80px;width:201px;height:61px;background:#ccffd6;border-right:1px solid #c4c8c4;border-bottom:1px solid #c4c8c4;line-height:60px;white-space:nowrap;overflow:hidden;padding-left:3px;"></div>
<div class="a" style="left:432px;top:80px;width:166px;height:61px;background:#ccffd6;border-right:1px solid #c4c8c4;border-bottom:1px solid #c4c8c4;line-height:60px;white-space:nowrap;overflow:hidden;padding-left:3px;"><i>300+3810+300</i></div>
<div class="a" style="left:598px;top:80px;width:157px;height:61px;background:#ccffd6;border-right:1px solid #c4c8c4;border-bottom:1px solid #c4c8c4;line-height:60px;white-space:nowrap;overflow:hidden;padding-left:3px;">端头<i>+</i>净长<i>+</i>端头</div>
<div class="a" style="left:755px;top:80px;width:40px;height:61px;background:#ccffd6;border-right:1px solid #c4c8c4;border-bottom:1px solid #c4c8c4;line-height:60px;white-space:nowrap;overflow:hidden;padding-left:3px;"><i>4410</i></div>
<div class="a" style="left:0px;top:141px;width:33px;height:61px;background:linear-gradient(180deg,#ffffff,#f6f4ee 45%,#e9e5da);border-right:1px solid #c4c8c4;border-bottom:1px solid #c4c8c4;line-height:60px;white-space:nowrap;overflow:hidden;text-align:center;"></div>
<div class="a" style="left:33px;top:141px;width:73px;height:61px;background:#ccffd6;border-right:1px solid #c4c8c4;border-bottom:1px solid #c4c8c4;line-height:60px;white-space:nowrap;overflow:hidden;padding-left:3px;"></div>
<div class="a" style="left:106px;top:141px;width:58px;height:61px;background:#ccffd6;border-right:1px solid #c4c8c4;border-bottom:1px solid #c4c8c4;line-height:60px;white-space:nowrap;overflow:hidden;padding-left:3px;"></div>
<div class="a" style="left:164px;top:141px;width:33px;height:61px;background:#ccffd6;border-right:1px solid #c4c8c4;border-bottom:1px solid #c4c8c4;line-height:60px;white-space:nowrap;overflow:hidden;text-align:center;"><span style="font-family:'Liberation Serif',serif;font-size:13px"></span></div>
<div class="a" style="left:197px;top:141px;width:34px;height:61px;background:#ccffd6;border-right:1px solid #c4c8c4;border-bottom:1px solid #c4c8c4;line-height:60px;white-space:nowrap;overflow:hidden;padding-left:3px;"></div>
<div class="a" style="left:231px;top:141px;width:201px;height:61px;background:#ccffd6;border-right:1px solid #c4c8c4;border-bottom:1px solid #c4c8c4;line-height:60px;white-space:nowrap;overflow:hidden;padding-left:3px;"></div>
<div class="a" style="left:432px;top:141px;width:166px;height:61px;background:#ccffd6;border-right:1px solid #c4c8c4;border-bottom:1px solid #c4c8c4;line-height:60px;white-space:nowrap;overflow:hidden;padding-left:3px;"></div>
<div class="a" style="left:598px;top:141px;width:157px;height:61px;background:#ccffd6;border-right:1px solid #c4c8c4;border-bottom:1px solid #c4c8c4;line-height:60px;white-space:nowrap;overflow:hidden;padding-left:3px;"></div>
<div class="a" style="left:755px;top:141px;width:40px;height:61px;background:#ccffd6;border-right:1px solid #c4c8c4;border-bottom:1px solid #c4c8c4;line-height:60px;white-space:nowrap;overflow:hidden;padding-left:3px;"></div>
<div class="a" style="left:105.5px;top:19px;width:1.6px;height:141px;background:#000"></div>
<svg style="left:0;top:0" width="792" height="160" viewBox="43 668 792 160">
<path d="M299.3 697 H438.3 L417.7 744" fill="none" stroke="#000" stroke-width="1.7"/><path d="M299.3 696.2 V711 L321.8 735.4" fill="none" stroke="#000" stroke-width="2.3"/>
<text x="437" y="703" font-family="Liberation Sans,sans-serif" font-size="11" fill="#000">330</text>
<text x="358" y="717" font-family="Liberation Sans,sans-serif" font-size="11" fill="#000">888</text>
<text x="309" y="735" font-family="Liberation Sans,sans-serif" font-size="11" fill="#000">209</text>
<text transform="translate(303,705) rotate(-90)" font-family="Liberation Sans,sans-serif" font-size="11" fill="#000" font-size="10">104</text>
<path d="M376.5 759 V802" stroke="#000" stroke-width="3.5"/>
<path d="M381 759 V802" stroke="#000" stroke-width="1"/>
<text transform="translate(364,753) rotate(90)" font-family="Liberation Sans,sans-serif" font-size="11" fill="#000">1840 300</text>
<text transform="translate(378,757) rotate(90)" font-family="Liberation Sans,sans-serif" font-size="11" fill="#000">0181 1088</text>
<text transform="translate(372,812) rotate(90)" font-family="Liberation Sans,sans-serif" font-size="11" fill="#000">15</text>
</svg>
</div>
<div class="a" style="left:815px;top:668px;width:20px;height:159px;background:#fbfbf8;border-left:1px solid #e8e7e0"></div>
<div class="a" style="left:817px;top:669px;width:15px;height:15px;border-radius:2px;border:1px solid #b4c8f4;background:linear-gradient(90deg,#d4e0fc,#c0d2fa)"></div>
<svg style="left:817px;top:669px" width="15" height="15"><path d="M4 9 L7.5 5 L11 9" stroke="#4d6185" stroke-width="2" fill="none"/></svg>
<div class="a" style="left:817px;top:806px;width:15px;height:15px;border-radius:2px;border:1px solid #b4c8f4;background:linear-gradient(90deg,#d4e0fc,#c0d2fa)"></div>
<svg style="left:817px;top:806px" width="15" height="15"><path d="M4 5 L7.5 9 L11 5" stroke="#4d6185" stroke-width="2" fill="none"/></svg>
<div class="a" style="left:817px;top:685px;width:15px;height:8px;border-radius:2px;border:1px solid #b4c8f4;background:linear-gradient(90deg,#d4e0fc,#c0d2fa)"></div>
<div class="a" style="left:43px;top:822px;width:791px;height:5px;background:#f4f3ee;border-top:1px solid #e8e7df"></div>
<div class="a" style="left:60px;top:823px;width:241px;height:4px;background:#c6d6fb;border:1px solid #b4c8f4;border-bottom:0"></div>
<div class="a" style="left:44px;top:823px;width:15px;height:4px;background:#c6d6fb;border:1px solid #b4c8f4;border-bottom:0"></div>
<div class="a" style="left:800px;top:823px;width:15px;height:4px;background:#c6d6fb;border:1px solid #b4c8f4;border-bottom:0"></div>
<div class="a" style="left:835px;top:32px;width:4px;height:795px;background:#0c36c4"></div>
</div><svg style="left:0;top:0;pointer-events:none" width="1171" height="827" viewBox="0 0 1171 827">
<line x1="253.0" y1="128.0" x2="595.0" y2="343.6" stroke="#f40000" stroke-width="3.2" stroke-linecap="round"/>
<polygon points="606.0,350.5 590.6,346.7 596.0,338.3" fill="#f40000"/>
<line x1="567.0" y1="400.5" x2="905.7" y2="498.5" stroke="#f40000" stroke-width="3.4" stroke-linecap="round"/>
<polygon points="923.0,503.5 902.0,504.2 905.6,491.7" fill="#f40000"/>
<line x1="573.0" y1="493.0" x2="438.8" y2="638.4" stroke="#f40000" stroke-width="3.2" stroke-linecap="round"/>
<polygon points="430.0,648.0 436.5,633.6 443.8,640.4" fill="#f40000"/>
</svg>

</body></html>
